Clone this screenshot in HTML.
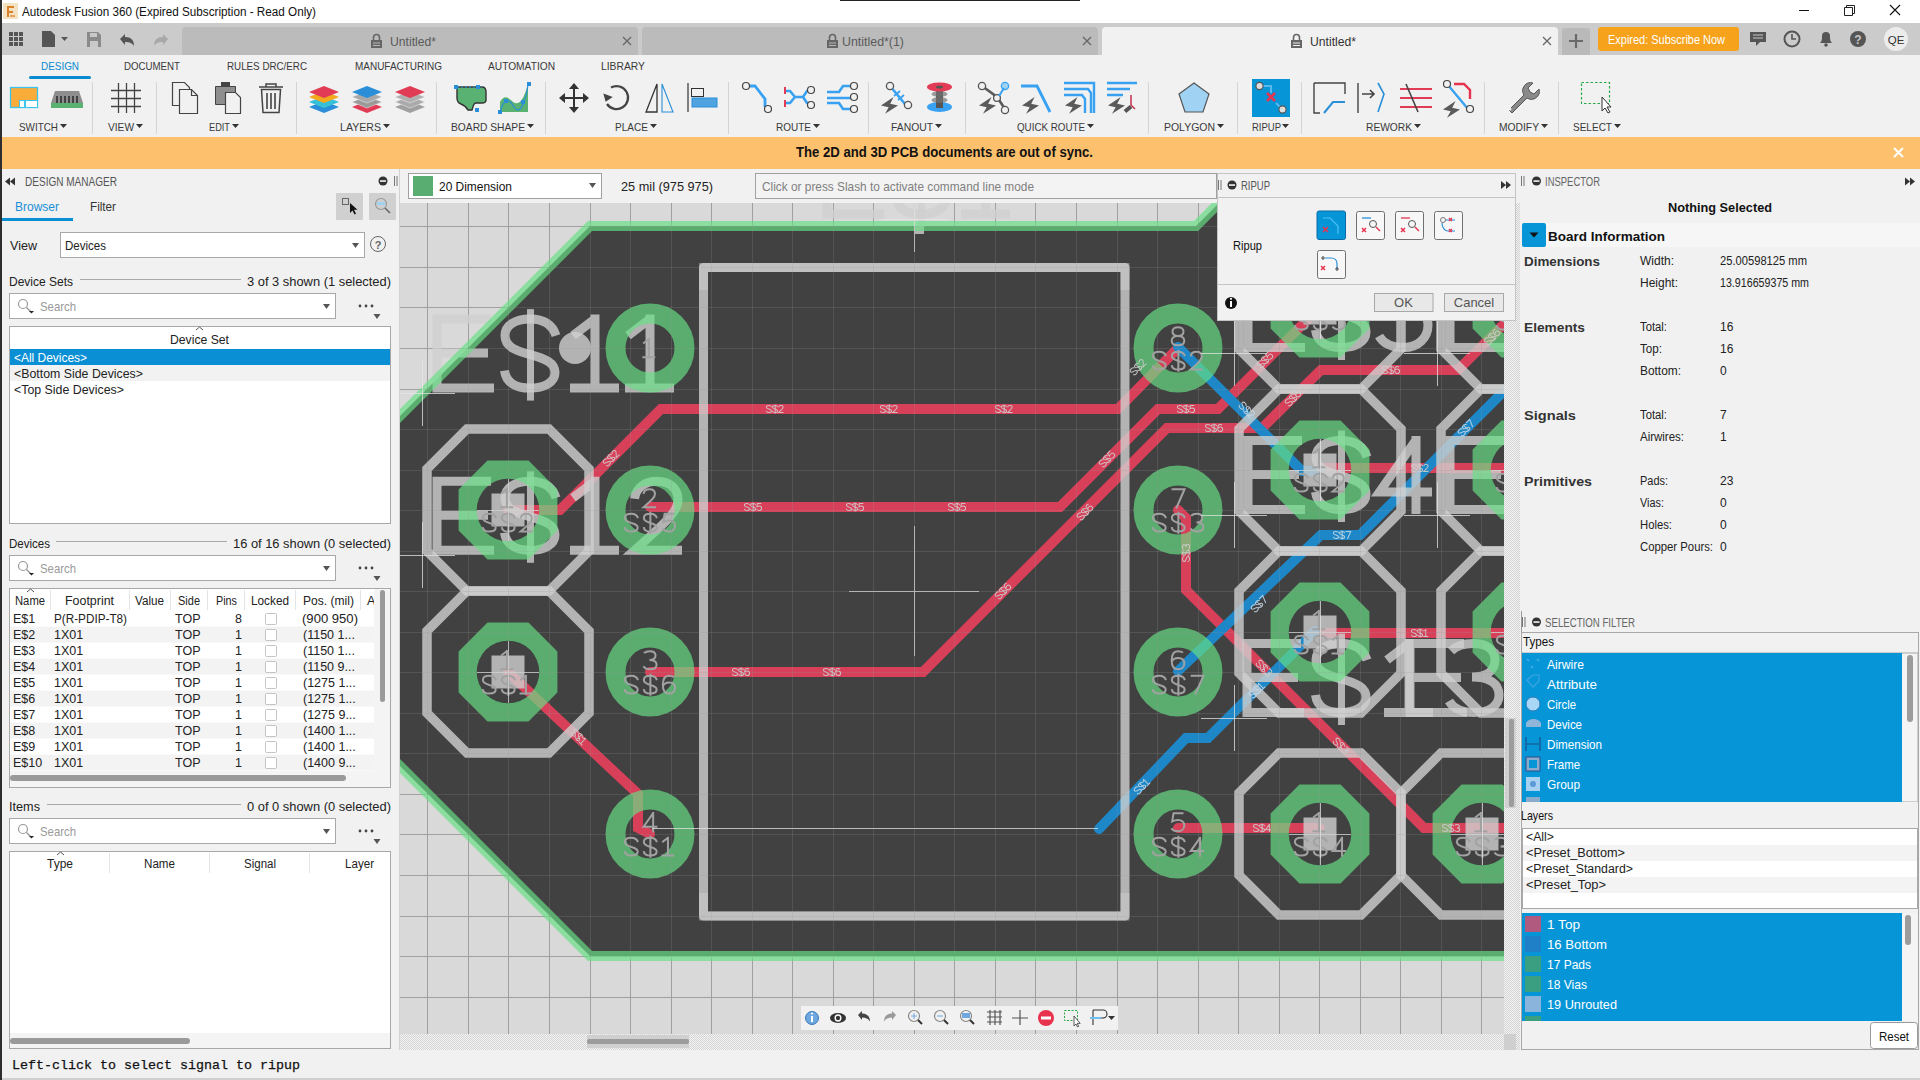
<!DOCTYPE html>
<html><head><meta charset="utf-8">
<style>
*{margin:0;padding:0;box-sizing:border-box}
html,body{width:1920px;height:1080px;overflow:hidden;background:#f1f1f1;font-family:"Liberation Sans",sans-serif;color:#222}
.a{position:absolute}
.t{position:absolute;white-space:nowrap;line-height:1}
svg{position:absolute;overflow:visible}
.lbl{position:absolute;font-size:11.5px;color:#3a3a3a;white-space:nowrap;line-height:1;top:121px}
.sep{position:absolute;top:82px;width:1px;height:52px;background:#d6d6d6}
.tri{display:inline-block;width:0;height:0;border-left:3.5px solid transparent;border-right:3.5px solid transparent;border-top:4px solid #333;margin-left:3px;vertical-align:2px}
</style></head><body>
<!-- left window border -->
<div class="a" style="left:0;top:0;width:2px;height:1080px;background:#2e2e2e;z-index:50"></div>

<!-- TITLE BAR -->
<div class="a" style="left:0;top:0;width:1920px;height:23px;background:#fff"></div>
<div class="a" style="left:840px;top:0;width:240px;height:1px;background:#222"></div>
<svg style="left:3px;top:3px" width="15" height="16"><rect x="0" y="0" width="15" height="16" fill="#f3e3c3"/><path d="M4 3h7v2H6v3h4v2H6v4H4z" fill="#d9822b"/><path d="M7 12h5v2H7z" fill="#e9a15a"/></svg>
<svg style="left:0;top:0" width="400" height="23"><text x="22" y="16" font-family="Liberation Sans" font-size="12.5" fill="#111" textLength="294" lengthAdjust="spacingAndGlyphs">Autodesk Fusion 360 (Expired Subscription - Read Only)</text></svg>
<svg style="left:1797px;top:4px" width="110" height="14">
 <path d="M2 6.5h10" stroke="#111" stroke-width="1"/>
 <path d="M47.5 3.5h8v8h-8z M49.5 3.5v-2h8v8h-2" fill="none" stroke="#222" stroke-width="1"/>
 <path d="M93 1l10 10M103 1l-10 10" stroke="#111" stroke-width="1.1"/>
</svg>

<!-- TAB BAR -->
<div class="a" style="left:0;top:23px;width:1920px;height:32px;background:#cbcbcb"></div>
<svg style="left:8px;top:31px" width="170" height="18">
 <g fill="#555"><rect x="1" y="1" width="4" height="4"/><rect x="6" y="1" width="4" height="4"/><rect x="11" y="1" width="4" height="4"/><rect x="1" y="6" width="4" height="4"/><rect x="6" y="6" width="4" height="4"/><rect x="11" y="6" width="4" height="4"/><rect x="1" y="11" width="4" height="4"/><rect x="6" y="11" width="4" height="4"/><rect x="11" y="11" width="4" height="4"/></g>
 <path d="M34 0h9l4 4v12h-13z" fill="#555"/><path d="M53 6h7l-3.5 4z" fill="#555"/>
 <path d="M79 1h11l3 3v12h-14z" fill="#8a8a8a"/><rect x="82" y="2" width="7" height="4" fill="#c8c8c8"/><rect x="82" y="10" width="8" height="6" fill="#c8c8c8"/>
 <path d="M112 8l5-5v3c6 0 9 3 9 9c-2-3-4-4-9-4v3z" fill="#555"/>
 <path d="M160 8l-5-5v3c-6 0-9 3-9 9c2-3 4-4 9-4v3z" fill="#a8a8a8"/>
</svg>
<div class="a" style="left:182px;top:27px;width:456px;height:28px;background:#bbbbbb;border-radius:4px 4px 0 0"></div>
<div class="a" style="left:642px;top:27px;width:456px;height:28px;background:#bbbbbb;border-radius:4px 4px 0 0"></div>
<div class="a" style="left:1102px;top:27px;width:456px;height:28px;background:#f1f1f1;border-radius:4px 4px 0 0"></div>
<svg style="left:370px;top:33px" width="13" height="16"><path d="M3.5 7V4.5a3 3 0 0 1 6 0V7" fill="none" stroke="#666" stroke-width="1.6"/><rect x="1" y="7" width="11" height="8" fill="#666"/><path d="M3 10h7M3 12.5h7" stroke="#b9b9b9" stroke-width="1"/></svg>
<svg style="left:0;top:23px" width="1920" height="32" viewBox="0 23 1920 32"><g font-family="Liberation Sans" font-size="13.5"><text x="390" y="46" fill="#5a5a5a" textLength="46" lengthAdjust="spacingAndGlyphs">Untitled*</text><text x="842" y="46" fill="#5a5a5a" textLength="62" lengthAdjust="spacingAndGlyphs">Untitled*(1)</text><text x="1310" y="46" fill="#333" textLength="46" lengthAdjust="spacingAndGlyphs">Untitled*</text></g></svg>
<svg style="left:622px;top:36px" width="10" height="10"><path d="M1 1l8 8M9 1l-8 8" stroke="#666" stroke-width="1.3"/></svg>
<svg style="left:826px;top:33px" width="13" height="16"><path d="M3.5 7V4.5a3 3 0 0 1 6 0V7" fill="none" stroke="#666" stroke-width="1.6"/><rect x="1" y="7" width="11" height="8" fill="#666"/><path d="M3 10h7M3 12.5h7" stroke="#b9b9b9" stroke-width="1"/></svg>

<svg style="left:1082px;top:36px" width="10" height="10"><path d="M1 1l8 8M9 1l-8 8" stroke="#666" stroke-width="1.3"/></svg>
<svg style="left:1290px;top:33px" width="13" height="16"><path d="M3.5 7V4.5a3 3 0 0 1 6 0V7" fill="none" stroke="#666" stroke-width="1.6"/><rect x="1" y="7" width="11" height="8" fill="#666"/><path d="M3 10h7M3 12.5h7" stroke="#f1f1f1" stroke-width="1"/></svg>

<svg style="left:1542px;top:36px" width="10" height="10"><path d="M1 1l8 8M9 1l-8 8" stroke="#666" stroke-width="1.3"/></svg>
<div class="a" style="left:1562px;top:28px;width:28px;height:27px;background:#b9b9b9;border-radius:3px 3px 0 0"></div>
<svg style="left:1569px;top:34px" width="14" height="14"><path d="M7 0v14M0 7h14" stroke="#6a6a6a" stroke-width="2.2"/></svg>
<div class="a" style="left:1598px;top:27px;width:141px;height:24px;background:#f7a21b;border-radius:3px"></div><svg style="left:0;top:23px" width="1920" height="32" viewBox="0 23 1920 32"><text x="1608" y="43.5" font-family="Liberation Sans" fill="#fff" font-size="13" textLength="117" lengthAdjust="spacingAndGlyphs">Expired: Subscribe Now</text></svg>

<svg style="left:1749px;top:30px" width="170" height="22">
 <path d="M1 2h16v10h-6l-4 4v-4H1z" fill="#555"/><path d="M4 5h10M4 8h10" stroke="#c8c8c8" stroke-width="1"/>
 <circle cx="43" cy="9" r="7.5" fill="none" stroke="#555" stroke-width="2"/><path d="M43 4v5h4" stroke="#555" stroke-width="1.6" fill="none"/>
 <path d="M71 13c2-2 2-4 2-7a4 4 0 0 1 8 0c0 3 0 5 2 7z" fill="#555"/><circle cx="77" cy="15" r="1.8" fill="#555"/>
 <circle cx="109" cy="9" r="8" fill="#555"/><text x="109" y="13.5" font-size="12" font-weight="bold" fill="#c8c8c8" text-anchor="middle" font-family="Liberation Sans">?</text>
 <circle cx="147" cy="9" r="12" fill="#ececec"/><text x="147" y="13.5" font-size="11.5" fill="#333" text-anchor="middle" font-family="Liberation Sans">QE</text>
</svg>

<!-- RIBBON -->
<div class="a" style="left:0;top:55px;width:1920px;height:82px;background:#f1f1f1"></div>
<svg style="left:0;top:55px" width="700" height="25" viewBox="0 55 700 25"><g font-family="Liberation Sans" font-size="11.5" fill="#3a3a3a"><text x="41" y="70" fill="#0a8bd0" textLength="38" lengthAdjust="spacingAndGlyphs">DESIGN</text><text x="124" y="70" textLength="56" lengthAdjust="spacingAndGlyphs">DOCUMENT</text><text x="227" y="70" textLength="80" lengthAdjust="spacingAndGlyphs">RULES DRC/ERC</text><text x="355" y="70" textLength="87" lengthAdjust="spacingAndGlyphs">MANUFACTURING</text><text x="488" y="70" textLength="67" lengthAdjust="spacingAndGlyphs">AUTOMATION</text><text x="601" y="70" textLength="44" lengthAdjust="spacingAndGlyphs">LIBRARY</text></g></svg>
<div class="a" style="left:29px;top:76px;width:62px;height:3px;background:#0a8bd0;border-radius:2px"></div>





<svg style="left:0;top:0" width="1920" height="140" viewBox="0 0 1920 140">
<g font-family="Liberation Sans" font-size="11.5" fill="#3a3a3a">
 <text x="19" y="131" textLength="39" lengthAdjust="spacingAndGlyphs">SWITCH</text>
 <text x="108" y="131" textLength="26" lengthAdjust="spacingAndGlyphs">VIEW</text>
 <text x="209" y="131" textLength="21" lengthAdjust="spacingAndGlyphs">EDIT</text>
 <text x="340" y="131" textLength="41" lengthAdjust="spacingAndGlyphs">LAYERS</text>
 <text x="451" y="131" textLength="74" lengthAdjust="spacingAndGlyphs">BOARD SHAPE</text>
 <text x="615" y="131" textLength="33" lengthAdjust="spacingAndGlyphs">PLACE</text>
 <text x="776" y="131" textLength="35" lengthAdjust="spacingAndGlyphs">ROUTE</text>
 <text x="891" y="131" textLength="42" lengthAdjust="spacingAndGlyphs">FANOUT</text>
 <text x="1017" y="131" textLength="68" lengthAdjust="spacingAndGlyphs">QUICK ROUTE</text>
 <text x="1164" y="131" textLength="51" lengthAdjust="spacingAndGlyphs">POLYGON</text>
 <text x="1252" y="131" textLength="29" lengthAdjust="spacingAndGlyphs">RIPUP</text>
 <text x="1366" y="131" textLength="46" lengthAdjust="spacingAndGlyphs">REWORK</text>
 <text x="1499" y="131" textLength="40" lengthAdjust="spacingAndGlyphs">MODIFY</text>
 <text x="1573" y="131" textLength="39" lengthAdjust="spacingAndGlyphs">SELECT</text>
</g>
<g fill="#333">
 <path d="M60 124h7l-3.5 4z"/><path d="M136 124h7l-3.5 4z"/><path d="M232 124h7l-3.5 4z"/><path d="M383 124h7l-3.5 4z"/>
 <path d="M527 124h7l-3.5 4z"/><path d="M650 124h7l-3.5 4z"/><path d="M813 124h7l-3.5 4z"/><path d="M935 124h7l-3.5 4z"/>
 <path d="M1087 124h7l-3.5 4z"/><path d="M1217 124h7l-3.5 4z"/><path d="M1282 124h7l-3.5 4z"/><path d="M1414 124h7l-3.5 4z"/>
 <path d="M1541 124h7l-3.5 4z"/><path d="M1614 124h7l-3.5 4z"/>
</g>
<g fill="#d4d4d4">
 <rect x="92" y="82" width="1" height="52"/><rect x="156" y="82" width="1" height="52"/><rect x="296" y="82" width="1" height="52"/>
 <rect x="436" y="82" width="1" height="52"/><rect x="545" y="82" width="1" height="52"/><rect x="728" y="82" width="1" height="52"/>
 <rect x="868" y="82" width="1" height="52"/><rect x="965" y="82" width="1" height="52"/><rect x="1148" y="82" width="1" height="52"/>
 <rect x="1237" y="82" width="1" height="52"/><rect x="1301" y="82" width="1" height="52"/><rect x="1484" y="82" width="1" height="52"/>
 <rect x="1558" y="82" width="1" height="52"/>
</g>
<!-- SWITCH board -->
<rect x="10.5" y="87.5" width="27" height="20" fill="#f9ac3a" stroke="#3cc4ee" stroke-width="1.3"/>
<rect x="19.5" y="100.5" width="5" height="7" fill="#fff" stroke="#3cc4ee" stroke-width="1"/><rect x="25.5" y="100.5" width="12" height="7" fill="#fff" stroke="#3cc4ee" stroke-width="1"/>
<!-- chip -->
<path d="M55 91h24l4 12h-32z" fill="#8e8e8e"/><rect x="51" y="103" width="32" height="5" fill="#5ab272"/>
<g stroke="#222" stroke-width="1.4"><path d="M57 96v7M61 96v7M65 96v7M69 96v7M73 96v7M77 96v7"/></g>
<!-- VIEW grid -->
<g stroke="#444" stroke-width="1.3"><path d="M118.5 83v30M126.5 83v30M134.5 83v30M111 90.5h30M111 98.5h30M111 106.5h30"/></g>
<!-- copy -->
<path d="M172.5 82.5h12l5 5v18h-17z" fill="#f1f1f1" stroke="#444" stroke-width="1.2"/>
<path d="M179.5 89.5h12l6 6v18h-18z" fill="#f1f1f1" stroke="#444" stroke-width="1.2"/><path d="M191.5 89.5v6h6" fill="none" stroke="#444" stroke-width="1.2"/>
<!-- paste -->
<path d="M215.5 86.5h20v18h-20z" fill="#8e8e8e" stroke="#444" stroke-width="1"/><rect x="221" y="82" width="9" height="5" fill="#444"/>
<path d="M225.5 92.5h10l5 5v16h-15z" fill="#f1f1f1" stroke="#444" stroke-width="1.2"/>
<!-- trash -->
<path d="M259 87h24M266 87v-3h10v3" fill="none" stroke="#444" stroke-width="1.5"/><path d="M261.5 89.5h19l-1.5 23h-16z" fill="#f1f1f1" stroke="#444" stroke-width="1.5"/>
<path d="M267 93v16M271 93v16M275 93v16" stroke="#444" stroke-width="1.6"/>
<!-- LAYERS -->
<g transform="translate(324,97)"><path d="M-15 10l15-6l15 6l-15 6z" fill="#2a8fd8"/><path d="M-15 5l15-6l15 6l-15 6z" fill="#37c0d8"/><path d="M-15 0l15-6l15 6l-15 6z" fill="#f4a81e"/><path d="M-15 -5l15-6l15 6l-15 6z" fill="#e23b55"/></g>
<g transform="translate(367,97)"><path d="M-15 10l15-6l15 6l-15 6z" fill="#e23b55"/><path d="M-15 5l15-6l15 6l-15 6z" fill="#9a9a9a" stroke="#f1f1f1" stroke-width=".5"/><path d="M-15 0l15-6l15 6l-15 6z" fill="#a8a8a8" stroke="#f1f1f1" stroke-width=".5"/><path d="M-15 -5l15-6l15 6l-15 6z" fill="#2a8fd8"/></g>
<g transform="translate(410,97)"><path d="M-15 10l15-6l15 6l-15 6z" fill="#a0a0a0"/><path d="M-15 5l15-6l15 6l-15 6z" fill="#aaa" stroke="#f1f1f1" stroke-width=".5"/><path d="M-15 0l15-6l15 6l-15 6z" fill="#b0b0b0" stroke="#f1f1f1" stroke-width=".5"/><path d="M-15 -5l15-6l15 6l-15 6z" fill="#e23b55"/></g>
<!-- BOARD SHAPE -->
<path d="M457 87h25c3 0 4 2 4 5v8c0 3-2 3-4 3h-6c-3 0-3 5-4 7h-4c-2-3-4-5-7-6c-3-1-4-3-4-6v-7c0-2 0-4 0-4z" fill="#5ab272" stroke="#333" stroke-width="1.4"/>
<path d="M457 87h25" stroke="#2a8fd8" stroke-dasharray="2 2" stroke-width="1.2"/>
<rect x="454" y="85" width="4" height="4" fill="#2a8fd8"/><rect x="476" y="85" width="4" height="4" fill="#2a8fd8"/><rect x="475" y="108" width="4" height="4" fill="#2a8fd8"/>
<path d="M500 112v-10c6-10 10-1 15 1c6 2 10-8 13-19v28z" fill="#5ab272"/>
<path d="M500 112c4-14 9-14 14-5c4 6 10 4 14-22" fill="none" stroke="#2a8fd8" stroke-width="1.2"/>
<rect x="498" y="110" width="4" height="4" fill="#2a8fd8"/><rect x="504" y="99" width="4" height="4" fill="#2a8fd8"/><rect x="521" y="100" width="4" height="4" fill="#2a8fd8"/><rect x="527" y="82" width="4" height="4" fill="#2a8fd8"/>
<!-- PLACE move -->
<g fill="#333"><path d="M574 83l-5 6h4v8h-8v-4l-6 5l6 5v-4h8v8h-4l5 6l5-6h-4v-8h8v4l6-5l-6-5v4h-8v-8h4z"/></g>
<path d="M611 87.5A11.5 11.5 0 1 1 607 104" fill="none" stroke="#444" stroke-width="2.3"/><path d="M602 95h10l-5 7z" fill="#444" transform="rotate(20 607 98)"/>
<path d="M657 112v-28l-11 28z" fill="none" stroke="#333" stroke-width="1.3"/><path d="M662 112v-28l11 28z" fill="none" stroke="#2a8fd8" stroke-width="1.1"/>
<path d="M688 83v29" stroke="#333" stroke-width="1.2"/><rect x="691.5" y="88.5" width="12" height="8" fill="none" stroke="#333" stroke-width="1"/><rect x="692" y="98" width="25" height="9" fill="#4fa3e0" stroke="#2a8fd8" stroke-width="1"/>
<!-- ROUTE -->
<path d="M749 86h6l10 13v8" fill="none" stroke="#38a1f2" stroke-width="2.8"/><circle cx="746" cy="86" r="3.5" fill="#f1f1f1" stroke="#444" stroke-width="1.2"/><circle cx="768" cy="109" r="3.5" fill="#f1f1f1" stroke="#444" stroke-width="1.2"/>
<path d="M786 91h4l5 6h8l4-6h3M786 103h4l5-6M803 97l4 6h3" fill="none" stroke="#38a1f2" stroke-width="2.6"/><rect x="784" y="87" width="2" height="7" fill="#e23b55"/><rect x="784" y="100" width="2" height="7" fill="#e23b55"/>
<circle cx="811" cy="90" r="3.5" fill="#f1f1f1" stroke="#444" stroke-width="1.2"/><circle cx="811" cy="105" r="3.5" fill="#f1f1f1" stroke="#444" stroke-width="1.2"/>
<path d="M827 92h12l4-6h8M827 98h24M827 103h12l4 6h8" fill="none" stroke="#38a1f2" stroke-width="2.6"/>
<circle cx="854" cy="86" r="3.5" fill="#f1f1f1" stroke="#444" stroke-width="1.2"/><circle cx="854" cy="97" r="3.5" fill="#f1f1f1" stroke="#444" stroke-width="1.2"/><circle cx="854" cy="109" r="3.5" fill="#f1f1f1" stroke="#444" stroke-width="1.2"/>
<!-- FANOUT -->
<path d="M893.6 97.0 L881.0 105.6 L888.7 107.2 L885.0 113.7 L898.0 105.4 L890.2 103.7z" fill="#5a5a5a"/><path d="M890 86l15 18" stroke="#38a1f2" stroke-width="2.6"/><path d="M894 96l6-5M898 100l6-5" stroke="#38a1f2" stroke-width="1.8"/>
<circle cx="890" cy="86" r="3.6" fill="#f1f1f1" stroke="#555" stroke-width="1.3"/><circle cx="908" cy="105" r="3.6" fill="#f1f1f1" stroke="#555" stroke-width="1.3"/>
<ellipse cx="939.5" cy="107" rx="12.5" ry="5" fill="#38a1f2"/><rect x="936" y="88" width="7" height="20" fill="#555"/><ellipse cx="939.5" cy="94" rx="8" ry="3" fill="#999"/><ellipse cx="939.5" cy="100" rx="8" ry="3" fill="#999"/><rect x="936" y="90" width="7" height="17" fill="#555" opacity=".7"/><ellipse cx="939.5" cy="87" rx="12.5" ry="4.5" fill="#e23b55"/><ellipse cx="939.5" cy="87" rx="3.5" ry="1.6" fill="#555"/>
<!-- QUICK ROUTE -->
<path d="M982 86l15 11l8 12" fill="none" stroke="#5a5a5a" stroke-width="2.6"/><circle cx="982" cy="86" r="3.6" fill="#f1f1f1" stroke="#555" stroke-width="1.3"/><circle cx="997" cy="98" r="3.4" fill="#f1f1f1" stroke="#555" stroke-width="1.3"/><circle cx="1005" cy="110" r="3.6" fill="#f1f1f1" stroke="#555" stroke-width="1.3"/><circle cx="1005" cy="86" r="3.6" fill="#9fd2f3" stroke="#38a1f2" stroke-width="1.3"/><path d="M999 96l5-8" stroke="#38a1f2" stroke-width="2"/>
<path d="M991.6 97.0 L979.0 105.6 L986.7 107.2 L983.0 113.7 L996.0 105.4 L988.2 103.7z" fill="#5a5a5a"/>
<path d="M1021 86h16l13 26" fill="none" stroke="#38a1f2" stroke-width="2.8"/><path d="M1034.6 97.0 L1022.0 105.6 L1029.7 107.2 L1026.0 113.7 L1039.0 105.4 L1031.2 103.7z" fill="#5a5a5a"/>
<path d="M1064 83h30v30M1064 89h24l3 4v20M1064 95h18l3 4v14" fill="none" stroke="#38a1f2" stroke-width="2.4"/><path d="M1077.6 97.0 L1065.0 105.6 L1072.7 107.2 L1069.0 113.7 L1082.0 105.4 L1074.2 103.7z" fill="#5a5a5a"/>
<path d="M1107 83h30M1107 89h23M1107 95h16" fill="none" stroke="#38a1f2" stroke-width="2.4"/><path d="M1131 95v10l4 4" fill="none" stroke="#c83a55" stroke-width="1.6"/><rect x="1124" y="107" width="8" height="4" fill="#555" transform="rotate(-40 1128 109)"/>
<path d="M1120.6 97.0 L1108.0 105.6 L1115.7 107.2 L1112.0 113.7 L1125.0 105.4 L1117.2 103.7z" fill="#5a5a5a"/>
<!-- POLYGON -->
<path d="M1194 83l15 11l-6 18h-18l-6-18z" fill="#9fd2f3" stroke="#555" stroke-width="1.2"/>
<!-- RIPUP -->
<rect x="1252" y="79" width="38" height="38" fill="#0696d7"/>
<path d="M1263 86h8v7M1276 103l4 4" fill="none" stroke="#5ab8f0" stroke-width="2"/>
<path d="M1267 93l8 8M1275 93l-8 8" stroke="#e8334f" stroke-width="2.6"/>
<circle cx="1259.5" cy="86" r="3.6" fill="#ddd" stroke="#555" stroke-width="1.2"/><circle cx="1282.5" cy="109.5" r="3.6" fill="#ddd" stroke="#555" stroke-width="1.2"/>
<!-- REWORK -->
<path d="M1314 83h31v11M1314 83v30h6" fill="none" stroke="#444" stroke-width="1.4"/><path d="M1324 113l9-11h12" fill="none" stroke="#2a8fd8" stroke-width="2"/>
<path d="M1358 83v30" stroke="#444" stroke-width="1.4"/><path d="M1362 94h12M1370 90l4 4l-4 4" fill="none" stroke="#444" stroke-width="1.6"/><path d="M1378 83l6 11l-6 18" fill="none" stroke="#2a8fd8" stroke-width="1.6"/>
<path d="M1400 89h32M1400 98h32M1400 107h32" stroke="#e23b55" stroke-width="1.8"/><path d="M1406 84l12 28" stroke="#444" stroke-width="1.6"/><path d="M1400 89h8M1400 98h10M1400 107h12" stroke="#f1f1f1" stroke-width="0"/>
<path d="M1448 85l20 24" stroke="#38a1f2" stroke-width="2.4"/><path d="M1454 84h10l6 6v9" fill="none" stroke="#e8334f" stroke-width="2.4"/><circle cx="1447" cy="84" r="3.5" fill="#f1f1f1" stroke="#444" stroke-width="1.2"/><circle cx="1470" cy="109" r="3.5" fill="#f1f1f1" stroke="#444" stroke-width="1.2"/>
<path d="M1455.6 101.0 L1443.0 109.6 L1450.7 111.2 L1447.0 117.7 L1460.0 109.4 L1452.2 107.7z" fill="#5a5a5a"/>
<!-- MODIFY wrench -->
<path d="M1509 110l15-15a8 8 0 0 1 9-12l-5 5l2 4l4 2l5-5a8 8 0 0 1-12 9l-15 15z" fill="#8a8a8a" stroke="#555" stroke-width="1"/><circle cx="1510" cy="109" r="1.5" fill="#f1f1f1"/>
<!-- SELECT -->
<rect x="1581.5" y="82.5" width="28" height="21" fill="none" stroke="#26a844" stroke-width="1.2" stroke-dasharray="2.5 2"/>
<path d="M1602 97v14l3-3l3 5l2-1l-3-5h4z" fill="#fff" stroke="#333" stroke-width="1"/>
</svg>


<!-- BANNER -->
<div class="a" style="left:0;top:137px;width:1920px;height:32px;background:#fdc06d"></div>
<svg style="left:0;top:137px" width="1920" height="32" viewBox="0 137 1920 32"><text x="796" y="157" font-family="Liberation Sans" font-size="14.5" font-weight="bold" fill="#111" textLength="297" lengthAdjust="spacingAndGlyphs">The 2D and 3D PCB documents are out of sync.</text></svg>
<svg style="left:1893px;top:147px" width="11" height="11"><path d="M1 1l9 9M10 1l-9 9" stroke="#fff" stroke-width="2"/></svg>

<!-- LEFT PANEL -->
<div class="a" style="left:2px;top:169px;width:397px;height:881px;background:#f1f1f1"></div>
<div class="a" style="left:399px;top:169px;width:1px;height:881px;background:#d2d2d2"></div>
<svg style="left:0;top:165px" width="400" height="890" viewBox="0 165 400 890">
 <g font-family="Liberation Sans">
 <path d="M5 181.5l5-4v8z M10 181.5l5-4v8z" fill="#333"/>
 <text x="25" y="186" font-size="12" fill="#555" textLength="92" lengthAdjust="spacingAndGlyphs">DESIGN MANAGER</text>
 <circle cx="383" cy="181" r="4.5" fill="#333"/><rect x="380" y="180.3" width="6" height="1.5" fill="#fff"/>
 <rect x="394" y="176" width="1" height="10" fill="#777"/><rect x="396.5" y="176" width="1" height="10" fill="#777"/>
 <text x="15" y="211" font-size="13.5" fill="#1a8fd5" textLength="44" lengthAdjust="spacingAndGlyphs">Browser</text>
 <text x="90" y="211" font-size="13.5" fill="#333" textLength="26" lengthAdjust="spacingAndGlyphs">Filter</text>
 <rect x="2" y="218" width="71" height="3" fill="#0a8fd5"/>
 <rect x="336" y="193" width="27" height="27" rx="1" fill="#d0d0d0"/><rect x="369" y="193" width="27" height="27" rx="1" fill="#d0d0d0"/>
 <rect x="342.5" y="198.5" width="6" height="6" fill="none" stroke="#666" stroke-width="1"/><path d="M350 203v10l2.5-2.5l2 4l1.5-.8l-2-4h3.5z" fill="#111"/>
 <circle cx="381" cy="204" r="5.5" fill="none" stroke="#999" stroke-width="1.2"/><rect x="377" y="202" width="8" height="3" fill="#9fd2f3"/><path d="M385 208l5 5" stroke="#666" stroke-width="1.6"/>
 <text x="10" y="250" font-size="13" fill="#222" textLength="27" lengthAdjust="spacingAndGlyphs">View</text>
 <rect x="60.5" y="232.5" width="304" height="25" fill="#fff" stroke="#a8a8a8"/>
 <text x="65" y="250" font-size="13" fill="#222" textLength="41" lengthAdjust="spacingAndGlyphs">Devices</text>
 <path d="M352 243h7l-3.5 5z" fill="#555"/>
 <circle cx="378" cy="244" r="7.5" fill="none" stroke="#666" stroke-width="1"/><text x="378" y="248.5" font-size="11" font-weight="bold" fill="#666" text-anchor="middle">?</text>

 <text x="9" y="286" font-size="13" fill="#222" textLength="64" lengthAdjust="spacingAndGlyphs">Device Sets</text>
 <rect x="80" y="279" width="161" height="1" fill="#a8a8a8"/>
 <text x="247" y="286" font-size="13" fill="#222" textLength="144" lengthAdjust="spacingAndGlyphs">3 of 3 shown (1 selected)</text>
 <rect x="9.5" y="293.5" width="326" height="25" fill="#fff" stroke="#a8a8a8"/>
 <circle cx="23" cy="304" r="4.5" fill="none" stroke="#999" stroke-width="1.2"/><path d="M26.5 307.5l4 4" stroke="#999" stroke-width="1.4"/><path d="M29 311h5l-2.5 2.5z" fill="#222"/>
 <text x="40" y="311" font-size="13" fill="#9a9a9a" textLength="36" lengthAdjust="spacingAndGlyphs">Search</text>
 <path d="M323 304h7l-3.5 5z" fill="#555"/>
 <circle cx="360" cy="306" r="1.4" fill="#444"/><circle cx="366" cy="306" r="1.4" fill="#444"/><circle cx="372" cy="306" r="1.4" fill="#444"/><path d="M373.5 314h7l-3.5 5z" fill="#555"/>
 <rect x="9.5" y="326.5" width="381" height="197" fill="#fff" stroke="#a8a8a8"/>
 <path d="M196 330l3.5-3l3.5 3" fill="none" stroke="#555" stroke-width="1"/>
 <text x="170" y="344" font-size="13" fill="#222" textLength="59" lengthAdjust="spacingAndGlyphs">Device Set</text>
 <rect x="10" y="349" width="380" height="16" fill="#0a8fd5"/>
 <rect x="10" y="365" width="380" height="16" fill="#f2f2f2"/>
 <text x="14" y="362" font-size="12.5" fill="#fff" textLength="73" lengthAdjust="spacingAndGlyphs">&lt;All Devices&gt;</text>
 <text x="14" y="378" font-size="12.5" fill="#222" textLength="129" lengthAdjust="spacingAndGlyphs">&lt;Bottom Side Devices&gt;</text>
 <text x="14" y="394" font-size="12.5" fill="#222" textLength="110" lengthAdjust="spacingAndGlyphs">&lt;Top Side Devices&gt;</text>

 <text x="9" y="548" font-size="13" fill="#222" textLength="41" lengthAdjust="spacingAndGlyphs">Devices</text>
 <rect x="56" y="541" width="171" height="1" fill="#a8a8a8"/>
 <text x="233" y="548" font-size="13" fill="#222" textLength="158" lengthAdjust="spacingAndGlyphs">16 of 16 shown (0 selected)</text>
 <rect x="9.5" y="555.5" width="326" height="25" fill="#fff" stroke="#a8a8a8"/>
 <circle cx="23" cy="566" r="4.5" fill="none" stroke="#999" stroke-width="1.2"/><path d="M26.5 569.5l4 4" stroke="#999" stroke-width="1.4"/><path d="M29 573h5l-2.5 2.5z" fill="#222"/>
 <text x="40" y="573" font-size="13" fill="#9a9a9a" textLength="36" lengthAdjust="spacingAndGlyphs">Search</text>
 <path d="M323 566h7l-3.5 5z" fill="#555"/>
 <circle cx="360" cy="568" r="1.4" fill="#444"/><circle cx="366" cy="568" r="1.4" fill="#444"/><circle cx="372" cy="568" r="1.4" fill="#444"/><path d="M373.5 576h7l-3.5 5z" fill="#555"/>
 <rect x="9.5" y="588.5" width="381" height="199" fill="#fff" stroke="#a8a8a8"/>
 <g fill="#f3f3f3"><rect x="10" y="626.5" width="364" height="16"/><rect x="10" y="658.5" width="364" height="16"/><rect x="10" y="690.5" width="364" height="16"/><rect x="10" y="722.5" width="364" height="16"/><rect x="10" y="754.5" width="364" height="16"/></g>
 <g fill="#e4e4e4"><rect x="50" y="590" width="1" height="20"/><rect x="129" y="590" width="1" height="20"/><rect x="170" y="590" width="1" height="20"/><rect x="207" y="590" width="1" height="20"/><rect x="244" y="590" width="1" height="20"/><rect x="295" y="590" width="1" height="20"/><rect x="360" y="590" width="1" height="20"/></g>
 <path d="M27 592l3.5-3l3.5 3" fill="none" stroke="#555" stroke-width="1"/>
 <g font-size="12.5" fill="#222">
 <text x="15" y="605" textLength="30" lengthAdjust="spacingAndGlyphs">Name</text>
 <text x="65" y="605" textLength="49" lengthAdjust="spacingAndGlyphs">Footprint</text>
 <text x="135" y="605" textLength="29" lengthAdjust="spacingAndGlyphs">Value</text>
 <text x="178" y="605" textLength="22" lengthAdjust="spacingAndGlyphs">Side</text>
 <text x="216" y="605" textLength="21" lengthAdjust="spacingAndGlyphs">Pins</text>
 <text x="251" y="605" textLength="38" lengthAdjust="spacingAndGlyphs">Locked</text>
 <text x="303" y="605" textLength="51" lengthAdjust="spacingAndGlyphs">Pos. (mil)</text>
 <text x="367" y="605">A</text>
 </g>
 <g font-size="12.5" fill="#222" id="devrows">
 <text x="13" y="623">E$1</text><text x="54" y="623" textLength="73" lengthAdjust="spacingAndGlyphs">P(R-PDIP-T8)</text><text x="175" y="623">TOP</text><text x="242" y="623" text-anchor="end">8</text><text x="302" y="623" textLength="56" lengthAdjust="spacingAndGlyphs">(900 950)</text>
 <text x="13" y="639">E$2</text><text x="54" y="639">1X01</text><text x="175" y="639">TOP</text><text x="242" y="639" text-anchor="end">1</text><text x="303" y="639">(1150 1...</text>
 <text x="13" y="655">E$3</text><text x="54" y="655">1X01</text><text x="175" y="655">TOP</text><text x="242" y="655" text-anchor="end">1</text><text x="303" y="655">(1150 1...</text>
 <text x="13" y="671">E$4</text><text x="54" y="671">1X01</text><text x="175" y="671">TOP</text><text x="242" y="671" text-anchor="end">1</text><text x="303" y="671">(1150 9...</text>
 <text x="13" y="687">E$5</text><text x="54" y="687">1X01</text><text x="175" y="687">TOP</text><text x="242" y="687" text-anchor="end">1</text><text x="303" y="687">(1275 1...</text>
 <text x="13" y="703">E$6</text><text x="54" y="703">1X01</text><text x="175" y="703">TOP</text><text x="242" y="703" text-anchor="end">1</text><text x="303" y="703">(1275 1...</text>
 <text x="13" y="719">E$7</text><text x="54" y="719">1X01</text><text x="175" y="719">TOP</text><text x="242" y="719" text-anchor="end">1</text><text x="303" y="719">(1275 9...</text>
 <text x="13" y="735">E$8</text><text x="54" y="735">1X01</text><text x="175" y="735">TOP</text><text x="242" y="735" text-anchor="end">1</text><text x="303" y="735">(1400 1...</text>
 <text x="13" y="751">E$9</text><text x="54" y="751">1X01</text><text x="175" y="751">TOP</text><text x="242" y="751" text-anchor="end">1</text><text x="303" y="751">(1400 1...</text>
 <text x="13" y="767">E$10</text><text x="54" y="767">1X01</text><text x="175" y="767">TOP</text><text x="242" y="767" text-anchor="end">1</text><text x="303" y="767">(1400 9...</text>
 </g>
 <g fill="#fff" stroke="#c4c4c4"><rect x="265.5" y="613.5" width="11" height="11" rx="1"/><rect x="265.5" y="629.5" width="11" height="11" rx="1"/><rect x="265.5" y="645.5" width="11" height="11" rx="1"/><rect x="265.5" y="661.5" width="11" height="11" rx="1"/><rect x="265.5" y="677.5" width="11" height="11" rx="1"/><rect x="265.5" y="693.5" width="11" height="11" rx="1"/><rect x="265.5" y="709.5" width="11" height="11" rx="1"/><rect x="265.5" y="725.5" width="11" height="11" rx="1"/><rect x="265.5" y="741.5" width="11" height="11" rx="1"/><rect x="265.5" y="757.5" width="11" height="11" rx="1"/></g>
 <rect x="374" y="589" width="16" height="198" fill="#f4f4f4"/><rect x="380" y="590" width="5" height="112" rx="2.5" fill="#9a9a9a"/>
 <rect x="10" y="771" width="364" height="16" fill="#f4f4f4"/><rect x="10" y="775" width="336" height="6" rx="3" fill="#9a9a9a"/>

 <text x="9" y="811" font-size="13" fill="#222" textLength="31" lengthAdjust="spacingAndGlyphs">Items</text>
 <rect x="47" y="804" width="194" height="1" fill="#a8a8a8"/>
 <text x="247" y="811" font-size="13" fill="#222" textLength="144" lengthAdjust="spacingAndGlyphs">0 of 0 shown (0 selected)</text>
 <rect x="9.5" y="818.5" width="326" height="25" fill="#fff" stroke="#a8a8a8"/>
 <circle cx="23" cy="829" r="4.5" fill="none" stroke="#999" stroke-width="1.2"/><path d="M26.5 832.5l4 4" stroke="#999" stroke-width="1.4"/><path d="M29 836h5l-2.5 2.5z" fill="#222"/>
 <text x="40" y="836" font-size="13" fill="#9a9a9a" textLength="36" lengthAdjust="spacingAndGlyphs">Search</text>
 <path d="M323 829h7l-3.5 5z" fill="#555"/>
 <circle cx="360" cy="831" r="1.4" fill="#444"/><circle cx="366" cy="831" r="1.4" fill="#444"/><circle cx="372" cy="831" r="1.4" fill="#444"/><path d="M373.5 839h7l-3.5 5z" fill="#555"/>
 <rect x="9.5" y="851.5" width="381" height="197" fill="#fff" stroke="#a8a8a8"/>
 <g fill="#e4e4e4"><rect x="109" y="853" width="1" height="20"/><rect x="209" y="853" width="1" height="20"/><rect x="309" y="853" width="1" height="20"/></g>
 <path d="M57 855l3.5-3l3.5 3" fill="none" stroke="#555" stroke-width="1"/>
 <g font-size="12.5" fill="#222">
 <text x="47" y="868" textLength="26" lengthAdjust="spacingAndGlyphs">Type</text>
 <text x="144" y="868" textLength="31" lengthAdjust="spacingAndGlyphs">Name</text>
 <text x="244" y="868" textLength="32" lengthAdjust="spacingAndGlyphs">Signal</text>
 <text x="345" y="868" textLength="29" lengthAdjust="spacingAndGlyphs">Layer</text>
 </g>
 <rect x="10" y="1033" width="380" height="15" fill="#f4f4f4"/><rect x="10" y="1038" width="180" height="6" rx="3" fill="#9a9a9a"/>
 </g>
</svg>
<!-- STATUS BAR -->
<div class="a" style="left:2px;top:1050px;width:1918px;height:30px;background:#f1f1f1"></div>
<div class="a" style="left:0;top:1078px;width:1920px;height:2px;background:#cfcfcf"></div>
<svg style="left:0;top:1050px" width="400" height="30" viewBox="0 1050 400 30"><text x="12" y="1069" font-family="Liberation Mono" font-size="13.3" fill="#111" stroke="#111" stroke-width="0.25" textLength="288" lengthAdjust="spacingAndGlyphs">Left-click to select signal to ripup</text></svg>

<!--CANVAS_START--><svg style="left:0;top:0" width="1920" height="1080" viewBox="0 0 1920 1080">
<defs>
<clipPath id="cv"><rect x="400" y="203" width="1104" height="831"/></clipPath>
<clipPath id="bd"><polygon points="380,436 590,226 1196,226 1229,193 1600,193 1600,956 590,956 380,746"/></clipPath>
</defs>
<rect x="400" y="169" width="1104" height="34" fill="#f1f1f1"/>
<g clip-path="url(#cv)">
<rect x="400" y="203" width="1104" height="831" fill="#d9d9d9"/>
<path d="M387.5 203V1034M427.5 203V1034M468.5 203V1034M508.5 203V1034M549.5 203V1034M590.5 203V1034M630.5 203V1034M671.5 203V1034M711.5 203V1034M752.5 203V1034M792.5 203V1034M833.5 203V1034M873.5 203V1034M914.5 203V1034M954.5 203V1034M995.5 203V1034M1035.5 203V1034M1076.5 203V1034M1117.5 203V1034M1157.5 203V1034M1198.5 203V1034M1238.5 203V1034M1279.5 203V1034M1319.5 203V1034M1360.5 203V1034M1400.5 203V1034M1441.5 203V1034M1481.5 203V1034M1522.5 203V1034M1562.5 203V1034M1603.5 203V1034M400 186.5H1504M400 226.5H1504M400 267.5H1504M400 307.5H1504M400 348.5H1504M400 389.5H1504M400 429.5H1504M400 470.5H1504M400 510.5H1504M400 551.5H1504M400 591.5H1504M400 632.5H1504M400 672.5H1504M400 713.5H1504M400 753.5H1504M400 794.5H1504M400 834.5H1504M400 875.5H1504M400 916.5H1504M400 956.5H1504M400 997.5H1504M400 1037.5H1504M400 1078.5H1504" stroke="#a0a0a0" stroke-width="1" fill="none"/>
<polygon points="380,436 590,226 1196,226 1229,193 1600,193 1600,956 590,956 380,746" fill="#414141"/>
<polyline points="508,510 560,510 661,409 1118,409 1178,348" fill="none" stroke="#d8405a" stroke-width="10" stroke-linejoin="miter" stroke-linecap="round"/>
<polyline points="650,507 1060,507 1158,409 1218,409 1320,307" fill="none" stroke="#d8405a" stroke-width="10" stroke-linejoin="miter" stroke-linecap="round"/>
<polyline points="650,672 923,672 1167,428 1262,428 1321,370 1458,370 1522,306" fill="none" stroke="#d8405a" stroke-width="10" stroke-linejoin="miter" stroke-linecap="round"/>
<polyline points="1320,468 1530,468" fill="none" stroke="#d8405a" stroke-width="10" stroke-linejoin="miter" stroke-linecap="round"/>
<polyline points="1320,633 1530,633" fill="none" stroke="#d8405a" stroke-width="10" stroke-linejoin="miter" stroke-linecap="round"/>
<polyline points="1178,510 1186,518 1186,590 1424,828 1530,828" fill="none" stroke="#d8405a" stroke-width="10" stroke-linejoin="miter" stroke-linecap="round"/>
<polyline points="1178,828 1320,828" fill="none" stroke="#d8405a" stroke-width="10" stroke-linejoin="miter" stroke-linecap="round"/>
<polyline points="508,672 638,794 638,828 650,834" fill="none" stroke="#d8405a" stroke-width="10" stroke-linejoin="miter" stroke-linecap="round"/>
<polyline points="1178,347 1302,471 1320,471" fill="none" stroke="#1d87c7" stroke-width="10" stroke-linejoin="miter" stroke-linecap="round"/>
<polyline points="1178,671 1321,535 1360,535 1530,365" fill="none" stroke="#1d87c7" stroke-width="10" stroke-linejoin="miter" stroke-linecap="round"/>
<polyline points="1099,829 1186,738 1208,738 1315,631" fill="none" stroke="#1d87c7" stroke-width="10" stroke-linejoin="miter" stroke-linecap="round"/>
<polygon points="467,429 549,429 589,469 589,551 549,591 467,591 427,551 427,469" fill="none" stroke="rgba(208,208,208,0.8)" stroke-width="9.5"/>
<polygon points="467,591 549,591 589,631 589,713 549,753 467,753 427,713 427,631" fill="none" stroke="rgba(208,208,208,0.8)" stroke-width="9.5"/>
<polygon points="1279,227 1361,227 1401,267 1401,349 1361,389 1279,389 1239,349 1239,267" fill="none" stroke="rgba(208,208,208,0.8)" stroke-width="9.5"/>
<polygon points="1279,389 1361,389 1401,429 1401,511 1361,551 1279,551 1239,511 1239,429" fill="none" stroke="rgba(208,208,208,0.8)" stroke-width="9.5"/>
<polygon points="1279,551 1361,551 1401,591 1401,673 1361,713 1279,713 1239,673 1239,591" fill="none" stroke="rgba(208,208,208,0.8)" stroke-width="9.5"/>
<polygon points="1481,227 1563,227 1603,267 1603,349 1563,389 1481,389 1441,349 1441,267" fill="none" stroke="rgba(208,208,208,0.8)" stroke-width="9.5"/>
<polygon points="1481,389 1563,389 1603,429 1603,511 1563,551 1481,551 1441,511 1441,429" fill="none" stroke="rgba(208,208,208,0.8)" stroke-width="9.5"/>
<polygon points="1481,551 1563,551 1603,591 1603,673 1563,713 1481,713 1441,673 1441,591" fill="none" stroke="rgba(208,208,208,0.8)" stroke-width="9.5"/>
<polygon points="1279,753 1361,753 1401,793 1401,875 1361,915 1279,915 1239,875 1239,793" fill="none" stroke="rgba(208,208,208,0.8)" stroke-width="9.5"/>
<polygon points="1441,753 1523,753 1563,793 1563,875 1523,915 1441,915 1401,875 1401,793" fill="none" stroke="rgba(208,208,208,0.8)" stroke-width="9.5"/>
<rect x="703.5" y="267.5" width="421.5" height="648.5" fill="none" stroke="rgba(208,208,208,0.8)" stroke-width="9" stroke-linejoin="round"/>
<circle cx="575" cy="348" r="16" fill="rgba(208,208,208,0.8)"/>
<path d="M699 267.5H1129.5M699 916H1129.5M703.5 263V290M1125 263V290M703.5 893V920M1125 893V920" stroke="rgba(208,208,208,0.45)" stroke-width="9" fill="none"/>
<rect x="491.5" y="493.5" width="33" height="33" fill="rgba(208,208,208,0.8)"/>
<rect x="491.5" y="655.5" width="33" height="33" fill="rgba(208,208,208,0.8)"/>
<rect x="1303.5" y="291.5" width="33" height="33" fill="rgba(208,208,208,0.8)"/>
<rect x="1303.5" y="453.5" width="33" height="33" fill="rgba(208,208,208,0.8)"/>
<rect x="1303.5" y="615.5" width="33" height="33" fill="rgba(208,208,208,0.8)"/>
<rect x="1505.5" y="291.5" width="33" height="33" fill="rgba(208,208,208,0.8)"/>
<rect x="1505.5" y="453.5" width="33" height="33" fill="rgba(208,208,208,0.8)"/>
<rect x="1505.5" y="615.5" width="33" height="33" fill="rgba(208,208,208,0.8)"/>
<rect x="1303.5" y="817.5" width="33" height="33" fill="rgba(208,208,208,0.8)"/>
<rect x="1465.5" y="817.5" width="33" height="33" fill="rgba(208,208,208,0.8)"/>
<path transform="translate(432,314.6)" d="M5 0V78M0.5 4.5H59M5 38.5H56M0.5 73.5H62" stroke="rgba(208,208,208,0.8)" stroke-width="9" fill="none"/>
<path transform="translate(500,314.6)" d="M30.5 -5.5V86" stroke="rgba(208,208,208,0.8)" stroke-width="7" fill="none"/>
<path transform="translate(500,314.6)" d="M56 21C52 9 42 4.5 30 4.5C15 4.5 5 11 5 21C5 33 17 36 30 40C45 44 55 48 55 58C55 68 44 73.5 30 73.5C16 73.5 6 68 4.5 56" stroke="rgba(208,208,208,0.8)" stroke-width="9" fill="none"/>
<path transform="translate(570,314.6)" d="M25 0V78M24 5L3 21M0 73.5H49" stroke="rgba(208,208,208,0.8)" stroke-width="9" fill="none"/>
<path transform="translate(625,314.6)" d="M25 0V78M24 5L3 21M0 73.5H49" stroke="rgba(208,208,208,0.8)" stroke-width="9" fill="none"/>
<path transform="translate(432,476.8)" d="M5 0V78M0.5 4.5H59M5 38.5H56M0.5 73.5H62" stroke="rgba(208,208,208,0.8)" stroke-width="9" fill="none"/>
<path transform="translate(500,476.8)" d="M30.5 -5.5V86" stroke="rgba(208,208,208,0.8)" stroke-width="7" fill="none"/>
<path transform="translate(500,476.8)" d="M56 21C52 9 42 4.5 30 4.5C15 4.5 5 11 5 21C5 33 17 36 30 40C45 44 55 48 55 58C55 68 44 73.5 30 73.5C16 73.5 6 68 4.5 56" stroke="rgba(208,208,208,0.8)" stroke-width="9" fill="none"/>
<path transform="translate(570,476.8)" d="M25 0V78M24 5L3 21M0 73.5H49" stroke="rgba(208,208,208,0.8)" stroke-width="9" fill="none"/>
<path transform="translate(630,476.8)" d="M4.5 22C6 10 16 4.5 27 4.5C40 4.5 48 12 48 23C48 34 40 42 4.5 73.5H52" stroke="rgba(208,208,208,0.8)" stroke-width="9" fill="none"/>
<path transform="translate(822,140.6)" d="M5 0V78M0.5 4.5H59M5 38.5H56M0.5 73.5H62" stroke="rgba(208,208,208,0.8)" stroke-width="9" fill="none"/>
<path transform="translate(891,140.6)" d="M30.5 -5.5V86" stroke="rgba(208,208,208,0.8)" stroke-width="7" fill="none"/>
<path transform="translate(891,140.6)" d="M56 21C52 9 42 4.5 30 4.5C15 4.5 5 11 5 21C5 33 17 36 30 40C45 44 55 48 55 58C55 68 44 73.5 30 73.5C16 73.5 6 68 4.5 56" stroke="rgba(208,208,208,0.8)" stroke-width="9" fill="none"/>
<path transform="translate(961,140.6)" d="M25 0V78M24 5L3 21M0 73.5H49" stroke="rgba(208,208,208,0.8)" stroke-width="9" fill="none"/>
<path transform="translate(1243,274)" d="M5 0V78M0.5 4.5H59M5 38.5H56M0.5 73.5H62" stroke="rgba(208,208,208,0.8)" stroke-width="9" fill="none"/>
<path transform="translate(1311,274)" d="M30.5 -5.5V86" stroke="rgba(208,208,208,0.8)" stroke-width="7" fill="none"/>
<path transform="translate(1311,274)" d="M56 21C52 9 42 4.5 30 4.5C15 4.5 5 11 5 21C5 33 17 36 30 40C45 44 55 48 55 58C55 68 44 73.5 30 73.5C16 73.5 6 68 4.5 56" stroke="rgba(208,208,208,0.8)" stroke-width="9" fill="none"/>
<path transform="translate(1375,274)" d="M50 4.5H12L7 36C14 32 21 30 29 30C44 30 53 39 53 51C53 64 43 73.5 29 73.5C17 73.5 8 69 4 62" stroke="rgba(208,208,208,0.8)" stroke-width="9" fill="none"/>
<path transform="translate(1243,436)" d="M5 0V78M0.5 4.5H59M5 38.5H56M0.5 73.5H62" stroke="rgba(208,208,208,0.8)" stroke-width="9" fill="none"/>
<path transform="translate(1311,436)" d="M30.5 -5.5V86" stroke="rgba(208,208,208,0.8)" stroke-width="7" fill="none"/>
<path transform="translate(1311,436)" d="M56 21C52 9 42 4.5 30 4.5C15 4.5 5 11 5 21C5 33 17 36 30 40C45 44 55 48 55 58C55 68 44 73.5 30 73.5C16 73.5 6 68 4.5 56" stroke="rgba(208,208,208,0.8)" stroke-width="9" fill="none"/>
<path transform="translate(1375,436)" d="M41 0V78M41 4L4.5 56H57" stroke="rgba(208,208,208,0.8)" stroke-width="9" fill="none"/>
<path transform="translate(1242,639)" d="M5 0V78M0.5 4.5H59M5 38.5H56M0.5 73.5H62" stroke="rgba(208,208,208,0.8)" stroke-width="9" fill="none"/>
<path transform="translate(1311,639)" d="M30.5 -5.5V86" stroke="rgba(208,208,208,0.8)" stroke-width="7" fill="none"/>
<path transform="translate(1311,639)" d="M56 21C52 9 42 4.5 30 4.5C15 4.5 5 11 5 21C5 33 17 36 30 40C45 44 55 48 55 58C55 68 44 73.5 30 73.5C16 73.5 6 68 4.5 56" stroke="rgba(208,208,208,0.8)" stroke-width="9" fill="none"/>
<path transform="translate(1384,639)" d="M25 0V78M24 5L3 21M0 73.5H49" stroke="rgba(208,208,208,0.8)" stroke-width="9" fill="none"/>
<path transform="translate(1445,639)" d="M6 12C12 6 20 4.5 28 4.5C42 4.5 50 11 50 21C50 32 41 38 27 38C45 38 54 45 54 56C54 67 44 73.5 29 73.5C17 73.5 8 69 4 62" stroke="rgba(208,208,208,0.8)" stroke-width="9" fill="none"/>
<path transform="translate(1445,274)" d="M5 0V78M0.5 4.5H59M5 38.5H56M0.5 73.5H62" stroke="rgba(208,208,208,0.8)" stroke-width="9" fill="none"/>
<path transform="translate(1445,436)" d="M5 0V78M0.5 4.5H59M5 38.5H56M0.5 73.5H62" stroke="rgba(208,208,208,0.8)" stroke-width="9" fill="none"/>
<path transform="translate(1405,639)" d="M5 0V78M0.5 4.5H59M5 38.5H56M0.5 73.5H62" stroke="rgba(208,208,208,0.8)" stroke-width="9" fill="none"/>
<rect x="915" y="226" width="9" height="8" fill="rgba(208,208,208,0.8)"/>
<circle cx="650" cy="348" r="34.5" fill="none" stroke="rgba(102,224,131,0.68)" stroke-width="20"/>
<circle cx="650" cy="510" r="34.5" fill="none" stroke="rgba(102,224,131,0.68)" stroke-width="20"/>
<circle cx="650" cy="672" r="34.5" fill="none" stroke="rgba(102,224,131,0.68)" stroke-width="20"/>
<circle cx="650" cy="834" r="34.5" fill="none" stroke="rgba(102,224,131,0.68)" stroke-width="20"/>
<circle cx="1178" cy="348" r="34.5" fill="none" stroke="rgba(102,224,131,0.68)" stroke-width="20"/>
<circle cx="1178" cy="510" r="34.5" fill="none" stroke="rgba(102,224,131,0.68)" stroke-width="20"/>
<circle cx="1178" cy="672" r="34.5" fill="none" stroke="rgba(102,224,131,0.68)" stroke-width="20"/>
<circle cx="1178" cy="834" r="34.5" fill="none" stroke="rgba(102,224,131,0.68)" stroke-width="20"/>
<path d="M487.5 460.6 L528.5 460.6 L557.4 489.5 L557.4 530.5 L528.5 559.4 L487.5 559.4 L458.6 530.5 L458.6 489.5ZM476.7 510a31.3 31.3 0 1 0 62.6 0a31.3 31.3 0 1 0 -62.6 0Z" fill="rgba(102,224,131,0.68)" fill-rule="evenodd"/>
<path d="M487.5 622.6 L528.5 622.6 L557.4 651.5 L557.4 692.5 L528.5 721.4 L487.5 721.4 L458.6 692.5 L458.6 651.5ZM476.7 672a31.3 31.3 0 1 0 62.6 0a31.3 31.3 0 1 0 -62.6 0Z" fill="rgba(102,224,131,0.68)" fill-rule="evenodd"/>
<path d="M1299.5 258.6 L1340.5 258.6 L1369.4 287.5 L1369.4 328.5 L1340.5 357.4 L1299.5 357.4 L1270.6 328.5 L1270.6 287.5ZM1288.7 308a31.3 31.3 0 1 0 62.6 0a31.3 31.3 0 1 0 -62.6 0Z" fill="rgba(102,224,131,0.68)" fill-rule="evenodd"/>
<path d="M1299.5 420.6 L1340.5 420.6 L1369.4 449.5 L1369.4 490.5 L1340.5 519.4 L1299.5 519.4 L1270.6 490.5 L1270.6 449.5ZM1288.7 470a31.3 31.3 0 1 0 62.6 0a31.3 31.3 0 1 0 -62.6 0Z" fill="rgba(102,224,131,0.68)" fill-rule="evenodd"/>
<path d="M1299.5 582.6 L1340.5 582.6 L1369.4 611.5 L1369.4 652.5 L1340.5 681.4 L1299.5 681.4 L1270.6 652.5 L1270.6 611.5ZM1288.7 632a31.3 31.3 0 1 0 62.6 0a31.3 31.3 0 1 0 -62.6 0Z" fill="rgba(102,224,131,0.68)" fill-rule="evenodd"/>
<path d="M1501.5 258.6 L1542.5 258.6 L1571.4 287.5 L1571.4 328.5 L1542.5 357.4 L1501.5 357.4 L1472.6 328.5 L1472.6 287.5ZM1490.7 308a31.3 31.3 0 1 0 62.6 0a31.3 31.3 0 1 0 -62.6 0Z" fill="rgba(102,224,131,0.68)" fill-rule="evenodd"/>
<path d="M1501.5 420.6 L1542.5 420.6 L1571.4 449.5 L1571.4 490.5 L1542.5 519.4 L1501.5 519.4 L1472.6 490.5 L1472.6 449.5ZM1490.7 470a31.3 31.3 0 1 0 62.6 0a31.3 31.3 0 1 0 -62.6 0Z" fill="rgba(102,224,131,0.68)" fill-rule="evenodd"/>
<path d="M1501.5 582.6 L1542.5 582.6 L1571.4 611.5 L1571.4 652.5 L1542.5 681.4 L1501.5 681.4 L1472.6 652.5 L1472.6 611.5ZM1490.7 632a31.3 31.3 0 1 0 62.6 0a31.3 31.3 0 1 0 -62.6 0Z" fill="rgba(102,224,131,0.68)" fill-rule="evenodd"/>
<path d="M1299.5 784.6 L1340.5 784.6 L1369.4 813.5 L1369.4 854.5 L1340.5 883.4 L1299.5 883.4 L1270.6 854.5 L1270.6 813.5ZM1288.7 834a31.3 31.3 0 1 0 62.6 0a31.3 31.3 0 1 0 -62.6 0Z" fill="rgba(102,224,131,0.68)" fill-rule="evenodd"/>
<path d="M1461.5 784.6 L1502.5 784.6 L1531.4 813.5 L1531.4 854.5 L1502.5 883.4 L1461.5 883.4 L1432.6 854.5 L1432.6 813.5ZM1450.7 834a31.3 31.3 0 1 0 62.6 0a31.3 31.3 0 1 0 -62.6 0Z" fill="rgba(102,224,131,0.68)" fill-rule="evenodd"/>
<polygon points="380,436 590,226 1196,226 1229,193 1600,193 1600,956 590,956 380,746" fill="none" stroke="rgba(102,224,131,0.68)" stroke-width="10"/>
<g fill="none" stroke="#a2a2a2" stroke-width="7.61"><path transform="translate(642.38,338.00) scale(0.2628)" d="M25 0V78M24 5L3 21M0 73.5H49"/></g>
<g fill="none" stroke="#a2a2a2" stroke-width="7.61"><path transform="translate(642.38,488.00) scale(0.2628)" d="M4.5 22C6 10 16 4.5 27 4.5C40 4.5 48 12 48 23C48 34 40 42 4.5 73.5H52"/></g>
<g fill="none" stroke="#a2a2a2" stroke-width="7.80"><path transform="translate(623.59,512.70) scale(0.2564)" d="M56 21C52 9 42 4.5 30 4.5C15 4.5 5 11 5 21C5 33 17 36 30 40C45 44 55 48 55 58C55 68 44 73.5 30 73.5C16 73.5 6 68 4.5 56"/><path transform="translate(642.56,512.70) scale(0.2564)" d="M30.5 -4V82M56 21C52 9 42 4.5 30 4.5C15 4.5 5 11 5 21C5 33 17 36 30 40C45 44 55 48 55 58C55 68 44 73.5 30 73.5C16 73.5 6 68 4.5 56"/><path transform="translate(661.54,512.70) scale(0.2564)" d="M50 4.5H12L7 36C14 32 21 30 29 30C44 30 53 39 53 51C53 64 43 73.5 29 73.5C17 73.5 8 69 4 62"/></g>
<g fill="none" stroke="#a2a2a2" stroke-width="7.61"><path transform="translate(642.38,650.00) scale(0.2628)" d="M6 12C12 6 20 4.5 28 4.5C42 4.5 50 11 50 21C50 32 41 38 27 38C45 38 54 45 54 56C54 67 44 73.5 29 73.5C17 73.5 8 69 4 62"/></g>
<g fill="none" stroke="#a2a2a2" stroke-width="7.80"><path transform="translate(623.59,674.70) scale(0.2564)" d="M56 21C52 9 42 4.5 30 4.5C15 4.5 5 11 5 21C5 33 17 36 30 40C45 44 55 48 55 58C55 68 44 73.5 30 73.5C16 73.5 6 68 4.5 56"/><path transform="translate(642.56,674.70) scale(0.2564)" d="M30.5 -4V82M56 21C52 9 42 4.5 30 4.5C15 4.5 5 11 5 21C5 33 17 36 30 40C45 44 55 48 55 58C55 68 44 73.5 30 73.5C16 73.5 6 68 4.5 56"/><path transform="translate(661.54,674.70) scale(0.2564)" d="M48 10C44 6 36 4.5 28 4.5C12 4.5 5 20 5 40C5 62 14 73.5 29 73.5C44 73.5 53 64 53 51C53 38 44 30 30 30C18 30 8 36 5 46"/></g>
<g fill="none" stroke="#a2a2a2" stroke-width="7.61"><path transform="translate(642.38,812.00) scale(0.2628)" d="M41 0V78M41 4L4.5 56H57"/></g>
<g fill="none" stroke="#a2a2a2" stroke-width="7.80"><path transform="translate(623.59,836.70) scale(0.2564)" d="M56 21C52 9 42 4.5 30 4.5C15 4.5 5 11 5 21C5 33 17 36 30 40C45 44 55 48 55 58C55 68 44 73.5 30 73.5C16 73.5 6 68 4.5 56"/><path transform="translate(642.56,836.70) scale(0.2564)" d="M30.5 -4V82M56 21C52 9 42 4.5 30 4.5C15 4.5 5 11 5 21C5 33 17 36 30 40C45 44 55 48 55 58C55 68 44 73.5 30 73.5C16 73.5 6 68 4.5 56"/><path transform="translate(661.54,836.70) scale(0.2564)" d="M25 0V78M24 5L3 21M0 73.5H49"/></g>
<g fill="none" stroke="#a2a2a2" stroke-width="7.61"><path transform="translate(1170.38,326.00) scale(0.2628)" d="M29 38C16 38 8 31 8 21C8 11 17 4.5 29 4.5C41 4.5 50 11 50 21C50 31 42 38 29 38C14 38 5 46 5 56C5 67 15 73.5 29 73.5C43 73.5 53 67 53 56C53 46 44 38 29 38Z"/></g>
<g fill="none" stroke="#a2a2a2" stroke-width="7.80"><path transform="translate(1151.59,350.70) scale(0.2564)" d="M56 21C52 9 42 4.5 30 4.5C15 4.5 5 11 5 21C5 33 17 36 30 40C45 44 55 48 55 58C55 68 44 73.5 30 73.5C16 73.5 6 68 4.5 56"/><path transform="translate(1170.56,350.70) scale(0.2564)" d="M30.5 -4V82M56 21C52 9 42 4.5 30 4.5C15 4.5 5 11 5 21C5 33 17 36 30 40C45 44 55 48 55 58C55 68 44 73.5 30 73.5C16 73.5 6 68 4.5 56"/><path transform="translate(1189.54,350.70) scale(0.2564)" d="M4.5 22C6 10 16 4.5 27 4.5C40 4.5 48 12 48 23C48 34 40 42 4.5 73.5H52"/></g>
<g fill="none" stroke="#a2a2a2" stroke-width="7.61"><path transform="translate(1170.38,488.00) scale(0.2628)" d="M4.5 4.5H54L22 78"/></g>
<g fill="none" stroke="#a2a2a2" stroke-width="7.80"><path transform="translate(1151.59,512.70) scale(0.2564)" d="M56 21C52 9 42 4.5 30 4.5C15 4.5 5 11 5 21C5 33 17 36 30 40C45 44 55 48 55 58C55 68 44 73.5 30 73.5C16 73.5 6 68 4.5 56"/><path transform="translate(1170.56,512.70) scale(0.2564)" d="M30.5 -4V82M56 21C52 9 42 4.5 30 4.5C15 4.5 5 11 5 21C5 33 17 36 30 40C45 44 55 48 55 58C55 68 44 73.5 30 73.5C16 73.5 6 68 4.5 56"/><path transform="translate(1189.54,512.70) scale(0.2564)" d="M6 12C12 6 20 4.5 28 4.5C42 4.5 50 11 50 21C50 32 41 38 27 38C45 38 54 45 54 56C54 67 44 73.5 29 73.5C17 73.5 8 69 4 62"/></g>
<g fill="none" stroke="#a2a2a2" stroke-width="7.61"><path transform="translate(1170.38,650.00) scale(0.2628)" d="M48 10C44 6 36 4.5 28 4.5C12 4.5 5 20 5 40C5 62 14 73.5 29 73.5C44 73.5 53 64 53 51C53 38 44 30 30 30C18 30 8 36 5 46"/></g>
<g fill="none" stroke="#a2a2a2" stroke-width="7.80"><path transform="translate(1151.59,674.70) scale(0.2564)" d="M56 21C52 9 42 4.5 30 4.5C15 4.5 5 11 5 21C5 33 17 36 30 40C45 44 55 48 55 58C55 68 44 73.5 30 73.5C16 73.5 6 68 4.5 56"/><path transform="translate(1170.56,674.70) scale(0.2564)" d="M30.5 -4V82M56 21C52 9 42 4.5 30 4.5C15 4.5 5 11 5 21C5 33 17 36 30 40C45 44 55 48 55 58C55 68 44 73.5 30 73.5C16 73.5 6 68 4.5 56"/><path transform="translate(1189.54,674.70) scale(0.2564)" d="M4.5 4.5H54L22 78"/></g>
<g fill="none" stroke="#a2a2a2" stroke-width="7.61"><path transform="translate(1170.38,812.00) scale(0.2628)" d="M50 4.5H12L7 36C14 32 21 30 29 30C44 30 53 39 53 51C53 64 43 73.5 29 73.5C17 73.5 8 69 4 62"/></g>
<g fill="none" stroke="#a2a2a2" stroke-width="7.80"><path transform="translate(1151.59,836.70) scale(0.2564)" d="M56 21C52 9 42 4.5 30 4.5C15 4.5 5 11 5 21C5 33 17 36 30 40C45 44 55 48 55 58C55 68 44 73.5 30 73.5C16 73.5 6 68 4.5 56"/><path transform="translate(1170.56,836.70) scale(0.2564)" d="M30.5 -4V82M56 21C52 9 42 4.5 30 4.5C15 4.5 5 11 5 21C5 33 17 36 30 40C45 44 55 48 55 58C55 68 44 73.5 30 73.5C16 73.5 6 68 4.5 56"/><path transform="translate(1189.54,836.70) scale(0.2564)" d="M41 0V78M41 4L4.5 56H57"/></g>
<g fill="none" stroke="#a2a2a2" stroke-width="7.61"><path transform="translate(500.38,488.00) scale(0.2628)" d="M25 0V78M24 5L3 21M0 73.5H49"/></g>
<g fill="none" stroke="#a2a2a2" stroke-width="7.80"><path transform="translate(481.59,512.70) scale(0.2564)" d="M56 21C52 9 42 4.5 30 4.5C15 4.5 5 11 5 21C5 33 17 36 30 40C45 44 55 48 55 58C55 68 44 73.5 30 73.5C16 73.5 6 68 4.5 56"/><path transform="translate(500.56,512.70) scale(0.2564)" d="M30.5 -4V82M56 21C52 9 42 4.5 30 4.5C15 4.5 5 11 5 21C5 33 17 36 30 40C45 44 55 48 55 58C55 68 44 73.5 30 73.5C16 73.5 6 68 4.5 56"/><path transform="translate(519.54,512.70) scale(0.2564)" d="M4.5 22C6 10 16 4.5 27 4.5C40 4.5 48 12 48 23C48 34 40 42 4.5 73.5H52"/></g>
<g fill="none" stroke="#a2a2a2" stroke-width="7.61"><path transform="translate(500.38,650.00) scale(0.2628)" d="M25 0V78M24 5L3 21M0 73.5H49"/></g>
<g fill="none" stroke="#a2a2a2" stroke-width="7.80"><path transform="translate(481.59,674.70) scale(0.2564)" d="M56 21C52 9 42 4.5 30 4.5C15 4.5 5 11 5 21C5 33 17 36 30 40C45 44 55 48 55 58C55 68 44 73.5 30 73.5C16 73.5 6 68 4.5 56"/><path transform="translate(500.56,674.70) scale(0.2564)" d="M30.5 -4V82M56 21C52 9 42 4.5 30 4.5C15 4.5 5 11 5 21C5 33 17 36 30 40C45 44 55 48 55 58C55 68 44 73.5 30 73.5C16 73.5 6 68 4.5 56"/><path transform="translate(519.54,674.70) scale(0.2564)" d="M25 0V78M24 5L3 21M0 73.5H49"/></g>
<g fill="none" stroke="#a2a2a2" stroke-width="7.61"><path transform="translate(1312.38,286.00) scale(0.2628)" d="M25 0V78M24 5L3 21M0 73.5H49"/></g>
<g fill="none" stroke="#a2a2a2" stroke-width="7.80"><path transform="translate(1293.59,310.70) scale(0.2564)" d="M56 21C52 9 42 4.5 30 4.5C15 4.5 5 11 5 21C5 33 17 36 30 40C45 44 55 48 55 58C55 68 44 73.5 30 73.5C16 73.5 6 68 4.5 56"/><path transform="translate(1312.56,310.70) scale(0.2564)" d="M30.5 -4V82M56 21C52 9 42 4.5 30 4.5C15 4.5 5 11 5 21C5 33 17 36 30 40C45 44 55 48 55 58C55 68 44 73.5 30 73.5C16 73.5 6 68 4.5 56"/><path transform="translate(1331.54,310.70) scale(0.2564)" d="M50 4.5H12L7 36C14 32 21 30 29 30C44 30 53 39 53 51C53 64 43 73.5 29 73.5C17 73.5 8 69 4 62"/></g>
<g fill="none" stroke="#a2a2a2" stroke-width="7.61"><path transform="translate(1312.38,448.00) scale(0.2628)" d="M25 0V78M24 5L3 21M0 73.5H49"/></g>
<g fill="none" stroke="#a2a2a2" stroke-width="7.80"><path transform="translate(1293.59,472.70) scale(0.2564)" d="M56 21C52 9 42 4.5 30 4.5C15 4.5 5 11 5 21C5 33 17 36 30 40C45 44 55 48 55 58C55 68 44 73.5 30 73.5C16 73.5 6 68 4.5 56"/><path transform="translate(1312.56,472.70) scale(0.2564)" d="M30.5 -4V82M56 21C52 9 42 4.5 30 4.5C15 4.5 5 11 5 21C5 33 17 36 30 40C45 44 55 48 55 58C55 68 44 73.5 30 73.5C16 73.5 6 68 4.5 56"/><path transform="translate(1331.54,472.70) scale(0.2564)" d="M4.5 22C6 10 16 4.5 27 4.5C40 4.5 48 12 48 23C48 34 40 42 4.5 73.5H52"/></g>
<g fill="none" stroke="#a2a2a2" stroke-width="7.61"><path transform="translate(1312.38,610.00) scale(0.2628)" d="M25 0V78M24 5L3 21M0 73.5H49"/></g>
<g fill="none" stroke="#a2a2a2" stroke-width="7.80"><path transform="translate(1293.59,634.70) scale(0.2564)" d="M56 21C52 9 42 4.5 30 4.5C15 4.5 5 11 5 21C5 33 17 36 30 40C45 44 55 48 55 58C55 68 44 73.5 30 73.5C16 73.5 6 68 4.5 56"/><path transform="translate(1312.56,634.70) scale(0.2564)" d="M30.5 -4V82M56 21C52 9 42 4.5 30 4.5C15 4.5 5 11 5 21C5 33 17 36 30 40C45 44 55 48 55 58C55 68 44 73.5 30 73.5C16 73.5 6 68 4.5 56"/><path transform="translate(1331.54,634.70) scale(0.2564)" d="M25 0V78M24 5L3 21M0 73.5H49"/></g>
<g fill="none" stroke="#a2a2a2" stroke-width="7.61"><path transform="translate(1312.38,812.00) scale(0.2628)" d="M25 0V78M24 5L3 21M0 73.5H49"/></g>
<g fill="none" stroke="#a2a2a2" stroke-width="7.80"><path transform="translate(1293.59,836.70) scale(0.2564)" d="M56 21C52 9 42 4.5 30 4.5C15 4.5 5 11 5 21C5 33 17 36 30 40C45 44 55 48 55 58C55 68 44 73.5 30 73.5C16 73.5 6 68 4.5 56"/><path transform="translate(1312.56,836.70) scale(0.2564)" d="M30.5 -4V82M56 21C52 9 42 4.5 30 4.5C15 4.5 5 11 5 21C5 33 17 36 30 40C45 44 55 48 55 58C55 68 44 73.5 30 73.5C16 73.5 6 68 4.5 56"/><path transform="translate(1331.54,836.70) scale(0.2564)" d="M41 0V78M41 4L4.5 56H57"/></g>
<g fill="none" stroke="#a2a2a2" stroke-width="7.61"><path transform="translate(1474.38,812.00) scale(0.2628)" d="M25 0V78M24 5L3 21M0 73.5H49"/></g>
<g fill="none" stroke="#a2a2a2" stroke-width="7.80"><path transform="translate(1455.59,836.70) scale(0.2564)" d="M56 21C52 9 42 4.5 30 4.5C15 4.5 5 11 5 21C5 33 17 36 30 40C45 44 55 48 55 58C55 68 44 73.5 30 73.5C16 73.5 6 68 4.5 56"/><path transform="translate(1474.56,836.70) scale(0.2564)" d="M30.5 -4V82M56 21C52 9 42 4.5 30 4.5C15 4.5 5 11 5 21C5 33 17 36 30 40C45 44 55 48 55 58C55 68 44 73.5 30 73.5C16 73.5 6 68 4.5 56"/><path transform="translate(1493.54,836.70) scale(0.2564)" d="M6 12C12 6 20 4.5 28 4.5C42 4.5 50 11 50 21C50 32 41 38 27 38C45 38 54 45 54 56C54 67 44 73.5 29 73.5C17 73.5 8 69 4 62"/></g>
<g fill="none" stroke="#a2a2a2" stroke-width="7.61"><path transform="translate(1514.38,448.00) scale(0.2628)" d="M25 0V78M24 5L3 21M0 73.5H49"/></g>
<g fill="none" stroke="#a2a2a2" stroke-width="7.80"><path transform="translate(1495.59,472.70) scale(0.2564)" d="M56 21C52 9 42 4.5 30 4.5C15 4.5 5 11 5 21C5 33 17 36 30 40C45 44 55 48 55 58C55 68 44 73.5 30 73.5C16 73.5 6 68 4.5 56"/><path transform="translate(1514.56,472.70) scale(0.2564)" d="M30.5 -4V82M56 21C52 9 42 4.5 30 4.5C15 4.5 5 11 5 21C5 33 17 36 30 40C45 44 55 48 55 58C55 68 44 73.5 30 73.5C16 73.5 6 68 4.5 56"/><path transform="translate(1533.54,472.70) scale(0.2564)" d="M4.5 22C6 10 16 4.5 27 4.5C40 4.5 48 12 48 23C48 34 40 42 4.5 73.5H52"/></g>
<g fill="none" stroke="#a2a2a2" stroke-width="7.61"><path transform="translate(1514.38,610.00) scale(0.2628)" d="M25 0V78M24 5L3 21M0 73.5H49"/></g>
<g fill="none" stroke="#a2a2a2" stroke-width="7.80"><path transform="translate(1495.59,634.70) scale(0.2564)" d="M56 21C52 9 42 4.5 30 4.5C15 4.5 5 11 5 21C5 33 17 36 30 40C45 44 55 48 55 58C55 68 44 73.5 30 73.5C16 73.5 6 68 4.5 56"/><path transform="translate(1514.56,634.70) scale(0.2564)" d="M30.5 -4V82M56 21C52 9 42 4.5 30 4.5C15 4.5 5 11 5 21C5 33 17 36 30 40C45 44 55 48 55 58C55 68 44 73.5 30 73.5C16 73.5 6 68 4.5 56"/><path transform="translate(1533.54,634.70) scale(0.2564)" d="M25 0V78M24 5L3 21M0 73.5H49"/></g>
<g fill="none" stroke="#a2a2a2" stroke-width="7.61"><path transform="translate(1514.38,286.00) scale(0.2628)" d="M25 0V78M24 5L3 21M0 73.5H49"/></g>
<g fill="none" stroke="#a2a2a2" stroke-width="7.80"><path transform="translate(1495.59,310.70) scale(0.2564)" d="M56 21C52 9 42 4.5 30 4.5C15 4.5 5 11 5 21C5 33 17 36 30 40C45 44 55 48 55 58C55 68 44 73.5 30 73.5C16 73.5 6 68 4.5 56"/><path transform="translate(1514.56,310.70) scale(0.2564)" d="M30.5 -4V82M56 21C52 9 42 4.5 30 4.5C15 4.5 5 11 5 21C5 33 17 36 30 40C45 44 55 48 55 58C55 68 44 73.5 30 73.5C16 73.5 6 68 4.5 56"/><path transform="translate(1533.54,310.70) scale(0.2564)" d="M48 10C44 6 36 4.5 28 4.5C12 4.5 5 20 5 40C5 62 14 73.5 29 73.5C44 73.5 53 64 53 51C53 38 44 30 30 30C18 30 8 36 5 46"/></g>
<g fill="none" stroke="rgba(205,205,205,0.9)" stroke-width="9.75"><path transform="translate(765.87,405.00) scale(0.1026)" d="M56 21C52 9 42 4.5 30 4.5C15 4.5 5 11 5 21C5 33 17 36 30 40C45 44 55 48 55 58C55 68 44 73.5 30 73.5C16 73.5 6 68 4.5 56"/><path transform="translate(772.03,405.00) scale(0.1026)" d="M30.5 -4V82M56 21C52 9 42 4.5 30 4.5C15 4.5 5 11 5 21C5 33 17 36 30 40C45 44 55 48 55 58C55 68 44 73.5 30 73.5C16 73.5 6 68 4.5 56"/><path transform="translate(778.18,405.00) scale(0.1026)" d="M4.5 22C6 10 16 4.5 27 4.5C40 4.5 48 12 48 23C48 34 40 42 4.5 73.5H52"/></g>
<g fill="none" stroke="rgba(205,205,205,0.9)" stroke-width="9.75"><path transform="translate(879.87,405.00) scale(0.1026)" d="M56 21C52 9 42 4.5 30 4.5C15 4.5 5 11 5 21C5 33 17 36 30 40C45 44 55 48 55 58C55 68 44 73.5 30 73.5C16 73.5 6 68 4.5 56"/><path transform="translate(886.03,405.00) scale(0.1026)" d="M30.5 -4V82M56 21C52 9 42 4.5 30 4.5C15 4.5 5 11 5 21C5 33 17 36 30 40C45 44 55 48 55 58C55 68 44 73.5 30 73.5C16 73.5 6 68 4.5 56"/><path transform="translate(892.18,405.00) scale(0.1026)" d="M4.5 22C6 10 16 4.5 27 4.5C40 4.5 48 12 48 23C48 34 40 42 4.5 73.5H52"/></g>
<g fill="none" stroke="rgba(205,205,205,0.9)" stroke-width="9.75"><path transform="translate(994.87,405.00) scale(0.1026)" d="M56 21C52 9 42 4.5 30 4.5C15 4.5 5 11 5 21C5 33 17 36 30 40C45 44 55 48 55 58C55 68 44 73.5 30 73.5C16 73.5 6 68 4.5 56"/><path transform="translate(1001.03,405.00) scale(0.1026)" d="M30.5 -4V82M56 21C52 9 42 4.5 30 4.5C15 4.5 5 11 5 21C5 33 17 36 30 40C45 44 55 48 55 58C55 68 44 73.5 30 73.5C16 73.5 6 68 4.5 56"/><path transform="translate(1007.18,405.00) scale(0.1026)" d="M4.5 22C6 10 16 4.5 27 4.5C40 4.5 48 12 48 23C48 34 40 42 4.5 73.5H52"/></g>
<g fill="none" stroke="rgba(205,205,205,0.9)" stroke-width="9.75"><path transform="translate(743.87,503.00) scale(0.1026)" d="M56 21C52 9 42 4.5 30 4.5C15 4.5 5 11 5 21C5 33 17 36 30 40C45 44 55 48 55 58C55 68 44 73.5 30 73.5C16 73.5 6 68 4.5 56"/><path transform="translate(750.03,503.00) scale(0.1026)" d="M30.5 -4V82M56 21C52 9 42 4.5 30 4.5C15 4.5 5 11 5 21C5 33 17 36 30 40C45 44 55 48 55 58C55 68 44 73.5 30 73.5C16 73.5 6 68 4.5 56"/><path transform="translate(756.18,503.00) scale(0.1026)" d="M50 4.5H12L7 36C14 32 21 30 29 30C44 30 53 39 53 51C53 64 43 73.5 29 73.5C17 73.5 8 69 4 62"/></g>
<g fill="none" stroke="rgba(205,205,205,0.9)" stroke-width="9.75"><path transform="translate(845.87,503.00) scale(0.1026)" d="M56 21C52 9 42 4.5 30 4.5C15 4.5 5 11 5 21C5 33 17 36 30 40C45 44 55 48 55 58C55 68 44 73.5 30 73.5C16 73.5 6 68 4.5 56"/><path transform="translate(852.03,503.00) scale(0.1026)" d="M30.5 -4V82M56 21C52 9 42 4.5 30 4.5C15 4.5 5 11 5 21C5 33 17 36 30 40C45 44 55 48 55 58C55 68 44 73.5 30 73.5C16 73.5 6 68 4.5 56"/><path transform="translate(858.18,503.00) scale(0.1026)" d="M50 4.5H12L7 36C14 32 21 30 29 30C44 30 53 39 53 51C53 64 43 73.5 29 73.5C17 73.5 8 69 4 62"/></g>
<g fill="none" stroke="rgba(205,205,205,0.9)" stroke-width="9.75"><path transform="translate(947.87,503.00) scale(0.1026)" d="M56 21C52 9 42 4.5 30 4.5C15 4.5 5 11 5 21C5 33 17 36 30 40C45 44 55 48 55 58C55 68 44 73.5 30 73.5C16 73.5 6 68 4.5 56"/><path transform="translate(954.03,503.00) scale(0.1026)" d="M30.5 -4V82M56 21C52 9 42 4.5 30 4.5C15 4.5 5 11 5 21C5 33 17 36 30 40C45 44 55 48 55 58C55 68 44 73.5 30 73.5C16 73.5 6 68 4.5 56"/><path transform="translate(960.18,503.00) scale(0.1026)" d="M50 4.5H12L7 36C14 32 21 30 29 30C44 30 53 39 53 51C53 64 43 73.5 29 73.5C17 73.5 8 69 4 62"/></g>
<g fill="none" stroke="rgba(205,205,205,0.9)" stroke-width="9.75"><path transform="translate(731.87,668.00) scale(0.1026)" d="M56 21C52 9 42 4.5 30 4.5C15 4.5 5 11 5 21C5 33 17 36 30 40C45 44 55 48 55 58C55 68 44 73.5 30 73.5C16 73.5 6 68 4.5 56"/><path transform="translate(738.03,668.00) scale(0.1026)" d="M30.5 -4V82M56 21C52 9 42 4.5 30 4.5C15 4.5 5 11 5 21C5 33 17 36 30 40C45 44 55 48 55 58C55 68 44 73.5 30 73.5C16 73.5 6 68 4.5 56"/><path transform="translate(744.18,668.00) scale(0.1026)" d="M48 10C44 6 36 4.5 28 4.5C12 4.5 5 20 5 40C5 62 14 73.5 29 73.5C44 73.5 53 64 53 51C53 38 44 30 30 30C18 30 8 36 5 46"/></g>
<g fill="none" stroke="rgba(205,205,205,0.9)" stroke-width="9.75"><path transform="translate(822.87,668.00) scale(0.1026)" d="M56 21C52 9 42 4.5 30 4.5C15 4.5 5 11 5 21C5 33 17 36 30 40C45 44 55 48 55 58C55 68 44 73.5 30 73.5C16 73.5 6 68 4.5 56"/><path transform="translate(829.03,668.00) scale(0.1026)" d="M30.5 -4V82M56 21C52 9 42 4.5 30 4.5C15 4.5 5 11 5 21C5 33 17 36 30 40C45 44 55 48 55 58C55 68 44 73.5 30 73.5C16 73.5 6 68 4.5 56"/><path transform="translate(835.18,668.00) scale(0.1026)" d="M48 10C44 6 36 4.5 28 4.5C12 4.5 5 20 5 40C5 62 14 73.5 29 73.5C44 73.5 53 64 53 51C53 38 44 30 30 30C18 30 8 36 5 46"/></g>
<g fill="none" stroke="rgba(205,205,205,0.9)" stroke-width="9.75"><path transform="translate(1176.87,405.00) scale(0.1026)" d="M56 21C52 9 42 4.5 30 4.5C15 4.5 5 11 5 21C5 33 17 36 30 40C45 44 55 48 55 58C55 68 44 73.5 30 73.5C16 73.5 6 68 4.5 56"/><path transform="translate(1183.03,405.00) scale(0.1026)" d="M30.5 -4V82M56 21C52 9 42 4.5 30 4.5C15 4.5 5 11 5 21C5 33 17 36 30 40C45 44 55 48 55 58C55 68 44 73.5 30 73.5C16 73.5 6 68 4.5 56"/><path transform="translate(1189.18,405.00) scale(0.1026)" d="M50 4.5H12L7 36C14 32 21 30 29 30C44 30 53 39 53 51C53 64 43 73.5 29 73.5C17 73.5 8 69 4 62"/></g>
<g fill="none" stroke="rgba(205,205,205,0.9)" stroke-width="9.75"><path transform="translate(1204.87,424.00) scale(0.1026)" d="M56 21C52 9 42 4.5 30 4.5C15 4.5 5 11 5 21C5 33 17 36 30 40C45 44 55 48 55 58C55 68 44 73.5 30 73.5C16 73.5 6 68 4.5 56"/><path transform="translate(1211.03,424.00) scale(0.1026)" d="M30.5 -4V82M56 21C52 9 42 4.5 30 4.5C15 4.5 5 11 5 21C5 33 17 36 30 40C45 44 55 48 55 58C55 68 44 73.5 30 73.5C16 73.5 6 68 4.5 56"/><path transform="translate(1217.18,424.00) scale(0.1026)" d="M48 10C44 6 36 4.5 28 4.5C12 4.5 5 20 5 40C5 62 14 73.5 29 73.5C44 73.5 53 64 53 51C53 38 44 30 30 30C18 30 8 36 5 46"/></g>
<g fill="none" stroke="rgba(205,205,205,0.9)" stroke-width="9.75"><path transform="translate(1381.87,366.00) scale(0.1026)" d="M56 21C52 9 42 4.5 30 4.5C15 4.5 5 11 5 21C5 33 17 36 30 40C45 44 55 48 55 58C55 68 44 73.5 30 73.5C16 73.5 6 68 4.5 56"/><path transform="translate(1388.03,366.00) scale(0.1026)" d="M30.5 -4V82M56 21C52 9 42 4.5 30 4.5C15 4.5 5 11 5 21C5 33 17 36 30 40C45 44 55 48 55 58C55 68 44 73.5 30 73.5C16 73.5 6 68 4.5 56"/><path transform="translate(1394.18,366.00) scale(0.1026)" d="M48 10C44 6 36 4.5 28 4.5C12 4.5 5 20 5 40C5 62 14 73.5 29 73.5C44 73.5 53 64 53 51C53 38 44 30 30 30C18 30 8 36 5 46"/></g>
<g fill="none" stroke="rgba(205,205,205,0.9)" stroke-width="9.75"><path transform="translate(1410.87,464.00) scale(0.1026)" d="M56 21C52 9 42 4.5 30 4.5C15 4.5 5 11 5 21C5 33 17 36 30 40C45 44 55 48 55 58C55 68 44 73.5 30 73.5C16 73.5 6 68 4.5 56"/><path transform="translate(1417.03,464.00) scale(0.1026)" d="M30.5 -4V82M56 21C52 9 42 4.5 30 4.5C15 4.5 5 11 5 21C5 33 17 36 30 40C45 44 55 48 55 58C55 68 44 73.5 30 73.5C16 73.5 6 68 4.5 56"/><path transform="translate(1423.18,464.00) scale(0.1026)" d="M4.5 22C6 10 16 4.5 27 4.5C40 4.5 48 12 48 23C48 34 40 42 4.5 73.5H52"/></g>
<g fill="none" stroke="rgba(205,205,205,0.9)" stroke-width="9.75"><path transform="translate(1410.87,629.00) scale(0.1026)" d="M56 21C52 9 42 4.5 30 4.5C15 4.5 5 11 5 21C5 33 17 36 30 40C45 44 55 48 55 58C55 68 44 73.5 30 73.5C16 73.5 6 68 4.5 56"/><path transform="translate(1417.03,629.00) scale(0.1026)" d="M30.5 -4V82M56 21C52 9 42 4.5 30 4.5C15 4.5 5 11 5 21C5 33 17 36 30 40C45 44 55 48 55 58C55 68 44 73.5 30 73.5C16 73.5 6 68 4.5 56"/><path transform="translate(1423.18,629.00) scale(0.1026)" d="M25 0V78M24 5L3 21M0 73.5H49"/></g>
<g fill="none" stroke="rgba(205,205,205,0.9)" stroke-width="9.75"><path transform="translate(1441.87,824.00) scale(0.1026)" d="M56 21C52 9 42 4.5 30 4.5C15 4.5 5 11 5 21C5 33 17 36 30 40C45 44 55 48 55 58C55 68 44 73.5 30 73.5C16 73.5 6 68 4.5 56"/><path transform="translate(1448.03,824.00) scale(0.1026)" d="M30.5 -4V82M56 21C52 9 42 4.5 30 4.5C15 4.5 5 11 5 21C5 33 17 36 30 40C45 44 55 48 55 58C55 68 44 73.5 30 73.5C16 73.5 6 68 4.5 56"/><path transform="translate(1454.18,824.00) scale(0.1026)" d="M6 12C12 6 20 4.5 28 4.5C42 4.5 50 11 50 21C50 32 41 38 27 38C45 38 54 45 54 56C54 67 44 73.5 29 73.5C17 73.5 8 69 4 62"/></g>
<g fill="none" stroke="rgba(205,205,205,0.9)" stroke-width="9.75"><path transform="translate(1252.87,824.00) scale(0.1026)" d="M56 21C52 9 42 4.5 30 4.5C15 4.5 5 11 5 21C5 33 17 36 30 40C45 44 55 48 55 58C55 68 44 73.5 30 73.5C16 73.5 6 68 4.5 56"/><path transform="translate(1259.03,824.00) scale(0.1026)" d="M30.5 -4V82M56 21C52 9 42 4.5 30 4.5C15 4.5 5 11 5 21C5 33 17 36 30 40C45 44 55 48 55 58C55 68 44 73.5 30 73.5C16 73.5 6 68 4.5 56"/><path transform="translate(1265.18,824.00) scale(0.1026)" d="M41 0V78M41 4L4.5 56H57"/></g>
<g transform="rotate(-45 611 458)" fill="none" stroke="rgba(205,205,205,0.9)" stroke-width="9.75"><path transform="translate(601.87,454.00) scale(0.1026)" d="M56 21C52 9 42 4.5 30 4.5C15 4.5 5 11 5 21C5 33 17 36 30 40C45 44 55 48 55 58C55 68 44 73.5 30 73.5C16 73.5 6 68 4.5 56"/><path transform="translate(608.03,454.00) scale(0.1026)" d="M30.5 -4V82M56 21C52 9 42 4.5 30 4.5C15 4.5 5 11 5 21C5 33 17 36 30 40C45 44 55 48 55 58C55 68 44 73.5 30 73.5C16 73.5 6 68 4.5 56"/><path transform="translate(614.18,454.00) scale(0.1026)" d="M4.5 22C6 10 16 4.5 27 4.5C40 4.5 48 12 48 23C48 34 40 42 4.5 73.5H52"/></g>
<g transform="rotate(-45 1107 459)" fill="none" stroke="rgba(205,205,205,0.9)" stroke-width="9.75"><path transform="translate(1097.87,455.00) scale(0.1026)" d="M56 21C52 9 42 4.5 30 4.5C15 4.5 5 11 5 21C5 33 17 36 30 40C45 44 55 48 55 58C55 68 44 73.5 30 73.5C16 73.5 6 68 4.5 56"/><path transform="translate(1104.03,455.00) scale(0.1026)" d="M30.5 -4V82M56 21C52 9 42 4.5 30 4.5C15 4.5 5 11 5 21C5 33 17 36 30 40C45 44 55 48 55 58C55 68 44 73.5 30 73.5C16 73.5 6 68 4.5 56"/><path transform="translate(1110.18,455.00) scale(0.1026)" d="M50 4.5H12L7 36C14 32 21 30 29 30C44 30 53 39 53 51C53 64 43 73.5 29 73.5C17 73.5 8 69 4 62"/></g>
<g transform="rotate(-45 1085 512)" fill="none" stroke="rgba(205,205,205,0.9)" stroke-width="9.75"><path transform="translate(1075.87,508.00) scale(0.1026)" d="M56 21C52 9 42 4.5 30 4.5C15 4.5 5 11 5 21C5 33 17 36 30 40C45 44 55 48 55 58C55 68 44 73.5 30 73.5C16 73.5 6 68 4.5 56"/><path transform="translate(1082.03,508.00) scale(0.1026)" d="M30.5 -4V82M56 21C52 9 42 4.5 30 4.5C15 4.5 5 11 5 21C5 33 17 36 30 40C45 44 55 48 55 58C55 68 44 73.5 30 73.5C16 73.5 6 68 4.5 56"/><path transform="translate(1088.18,508.00) scale(0.1026)" d="M48 10C44 6 36 4.5 28 4.5C12 4.5 5 20 5 40C5 62 14 73.5 29 73.5C44 73.5 53 64 53 51C53 38 44 30 30 30C18 30 8 36 5 46"/></g>
<g transform="rotate(-45 1003 591)" fill="none" stroke="rgba(205,205,205,0.9)" stroke-width="9.75"><path transform="translate(993.87,587.00) scale(0.1026)" d="M56 21C52 9 42 4.5 30 4.5C15 4.5 5 11 5 21C5 33 17 36 30 40C45 44 55 48 55 58C55 68 44 73.5 30 73.5C16 73.5 6 68 4.5 56"/><path transform="translate(1000.03,587.00) scale(0.1026)" d="M30.5 -4V82M56 21C52 9 42 4.5 30 4.5C15 4.5 5 11 5 21C5 33 17 36 30 40C45 44 55 48 55 58C55 68 44 73.5 30 73.5C16 73.5 6 68 4.5 56"/><path transform="translate(1006.18,587.00) scale(0.1026)" d="M48 10C44 6 36 4.5 28 4.5C12 4.5 5 20 5 40C5 62 14 73.5 29 73.5C44 73.5 53 64 53 51C53 38 44 30 30 30C18 30 8 36 5 46"/></g>
<g transform="rotate(-45 1138 367)" fill="none" stroke="rgba(205,205,205,0.9)" stroke-width="9.75"><path transform="translate(1128.87,363.00) scale(0.1026)" d="M56 21C52 9 42 4.5 30 4.5C15 4.5 5 11 5 21C5 33 17 36 30 40C45 44 55 48 55 58C55 68 44 73.5 30 73.5C16 73.5 6 68 4.5 56"/><path transform="translate(1135.03,363.00) scale(0.1026)" d="M30.5 -4V82M56 21C52 9 42 4.5 30 4.5C15 4.5 5 11 5 21C5 33 17 36 30 40C45 44 55 48 55 58C55 68 44 73.5 30 73.5C16 73.5 6 68 4.5 56"/><path transform="translate(1141.18,363.00) scale(0.1026)" d="M4.5 22C6 10 16 4.5 27 4.5C40 4.5 48 12 48 23C48 34 40 42 4.5 73.5H52"/></g>
<g transform="rotate(-45 1293 398)" fill="none" stroke="rgba(205,205,205,0.9)" stroke-width="9.75"><path transform="translate(1283.87,394.00) scale(0.1026)" d="M56 21C52 9 42 4.5 30 4.5C15 4.5 5 11 5 21C5 33 17 36 30 40C45 44 55 48 55 58C55 68 44 73.5 30 73.5C16 73.5 6 68 4.5 56"/><path transform="translate(1290.03,394.00) scale(0.1026)" d="M30.5 -4V82M56 21C52 9 42 4.5 30 4.5C15 4.5 5 11 5 21C5 33 17 36 30 40C45 44 55 48 55 58C55 68 44 73.5 30 73.5C16 73.5 6 68 4.5 56"/><path transform="translate(1296.18,394.00) scale(0.1026)" d="M48 10C44 6 36 4.5 28 4.5C12 4.5 5 20 5 40C5 62 14 73.5 29 73.5C44 73.5 53 64 53 51C53 38 44 30 30 30C18 30 8 36 5 46"/></g>
<g transform="rotate(45 579 737)" fill="none" stroke="rgba(205,205,205,0.9)" stroke-width="9.75"><path transform="translate(569.87,733.00) scale(0.1026)" d="M56 21C52 9 42 4.5 30 4.5C15 4.5 5 11 5 21C5 33 17 36 30 40C45 44 55 48 55 58C55 68 44 73.5 30 73.5C16 73.5 6 68 4.5 56"/><path transform="translate(576.03,733.00) scale(0.1026)" d="M30.5 -4V82M56 21C52 9 42 4.5 30 4.5C15 4.5 5 11 5 21C5 33 17 36 30 40C45 44 55 48 55 58C55 68 44 73.5 30 73.5C16 73.5 6 68 4.5 56"/><path transform="translate(582.18,733.00) scale(0.1026)" d="M25 0V78M24 5L3 21M0 73.5H49"/></g>
<g transform="rotate(45 1264 668)" fill="none" stroke="rgba(205,205,205,0.9)" stroke-width="9.75"><path transform="translate(1254.87,664.00) scale(0.1026)" d="M56 21C52 9 42 4.5 30 4.5C15 4.5 5 11 5 21C5 33 17 36 30 40C45 44 55 48 55 58C55 68 44 73.5 30 73.5C16 73.5 6 68 4.5 56"/><path transform="translate(1261.03,664.00) scale(0.1026)" d="M30.5 -4V82M56 21C52 9 42 4.5 30 4.5C15 4.5 5 11 5 21C5 33 17 36 30 40C45 44 55 48 55 58C55 68 44 73.5 30 73.5C16 73.5 6 68 4.5 56"/><path transform="translate(1267.18,664.00) scale(0.1026)" d="M6 12C12 6 20 4.5 28 4.5C42 4.5 50 11 50 21C50 32 41 38 27 38C45 38 54 45 54 56C54 67 44 73.5 29 73.5C17 73.5 8 69 4 62"/></g>
<g transform="rotate(-90 1186 553)" fill="none" stroke="rgba(205,205,205,0.9)" stroke-width="9.75"><path transform="translate(1176.87,549.00) scale(0.1026)" d="M56 21C52 9 42 4.5 30 4.5C15 4.5 5 11 5 21C5 33 17 36 30 40C45 44 55 48 55 58C55 68 44 73.5 30 73.5C16 73.5 6 68 4.5 56"/><path transform="translate(1183.03,549.00) scale(0.1026)" d="M30.5 -4V82M56 21C52 9 42 4.5 30 4.5C15 4.5 5 11 5 21C5 33 17 36 30 40C45 44 55 48 55 58C55 68 44 73.5 30 73.5C16 73.5 6 68 4.5 56"/><path transform="translate(1189.18,549.00) scale(0.1026)" d="M6 12C12 6 20 4.5 28 4.5C42 4.5 50 11 50 21C50 32 41 38 27 38C45 38 54 45 54 56C54 67 44 73.5 29 73.5C17 73.5 8 69 4 62"/></g>
<g transform="rotate(45 1341 746)" fill="none" stroke="rgba(205,205,205,0.9)" stroke-width="9.75"><path transform="translate(1331.87,742.00) scale(0.1026)" d="M56 21C52 9 42 4.5 30 4.5C15 4.5 5 11 5 21C5 33 17 36 30 40C45 44 55 48 55 58C55 68 44 73.5 30 73.5C16 73.5 6 68 4.5 56"/><path transform="translate(1338.03,742.00) scale(0.1026)" d="M30.5 -4V82M56 21C52 9 42 4.5 30 4.5C15 4.5 5 11 5 21C5 33 17 36 30 40C45 44 55 48 55 58C55 68 44 73.5 30 73.5C16 73.5 6 68 4.5 56"/><path transform="translate(1344.18,742.00) scale(0.1026)" d="M6 12C12 6 20 4.5 28 4.5C42 4.5 50 11 50 21C50 32 41 38 27 38C45 38 54 45 54 56C54 67 44 73.5 29 73.5C17 73.5 8 69 4 62"/></g>
<g transform="rotate(-45 1265 360)" fill="none" stroke="rgba(205,205,205,0.9)" stroke-width="9.75"><path transform="translate(1255.87,356.00) scale(0.1026)" d="M56 21C52 9 42 4.5 30 4.5C15 4.5 5 11 5 21C5 33 17 36 30 40C45 44 55 48 55 58C55 68 44 73.5 30 73.5C16 73.5 6 68 4.5 56"/><path transform="translate(1262.03,356.00) scale(0.1026)" d="M30.5 -4V82M56 21C52 9 42 4.5 30 4.5C15 4.5 5 11 5 21C5 33 17 36 30 40C45 44 55 48 55 58C55 68 44 73.5 30 73.5C16 73.5 6 68 4.5 56"/><path transform="translate(1268.18,356.00) scale(0.1026)" d="M50 4.5H12L7 36C14 32 21 30 29 30C44 30 53 39 53 51C53 64 43 73.5 29 73.5C17 73.5 8 69 4 62"/></g>
<g transform="rotate(-45 1492 337)" fill="none" stroke="rgba(205,205,205,0.9)" stroke-width="9.75"><path transform="translate(1482.87,333.00) scale(0.1026)" d="M56 21C52 9 42 4.5 30 4.5C15 4.5 5 11 5 21C5 33 17 36 30 40C45 44 55 48 55 58C55 68 44 73.5 30 73.5C16 73.5 6 68 4.5 56"/><path transform="translate(1489.03,333.00) scale(0.1026)" d="M30.5 -4V82M56 21C52 9 42 4.5 30 4.5C15 4.5 5 11 5 21C5 33 17 36 30 40C45 44 55 48 55 58C55 68 44 73.5 30 73.5C16 73.5 6 68 4.5 56"/><path transform="translate(1495.18,333.00) scale(0.1026)" d="M48 10C44 6 36 4.5 28 4.5C12 4.5 5 20 5 40C5 62 14 73.5 29 73.5C44 73.5 53 64 53 51C53 38 44 30 30 30C18 30 8 36 5 46"/></g>
<g fill="none" stroke="rgba(200,215,230,0.9)" stroke-width="9.75"><path transform="translate(1332.87,531.00) scale(0.1026)" d="M56 21C52 9 42 4.5 30 4.5C15 4.5 5 11 5 21C5 33 17 36 30 40C45 44 55 48 55 58C55 68 44 73.5 30 73.5C16 73.5 6 68 4.5 56"/><path transform="translate(1339.03,531.00) scale(0.1026)" d="M30.5 -4V82M56 21C52 9 42 4.5 30 4.5C15 4.5 5 11 5 21C5 33 17 36 30 40C45 44 55 48 55 58C55 68 44 73.5 30 73.5C16 73.5 6 68 4.5 56"/><path transform="translate(1345.18,531.00) scale(0.1026)" d="M4.5 4.5H54L22 78"/></g>
<g transform="rotate(-45 1466 428)" fill="none" stroke="rgba(200,215,230,0.9)" stroke-width="9.75"><path transform="translate(1456.87,424.00) scale(0.1026)" d="M56 21C52 9 42 4.5 30 4.5C15 4.5 5 11 5 21C5 33 17 36 30 40C45 44 55 48 55 58C55 68 44 73.5 30 73.5C16 73.5 6 68 4.5 56"/><path transform="translate(1463.03,424.00) scale(0.1026)" d="M30.5 -4V82M56 21C52 9 42 4.5 30 4.5C15 4.5 5 11 5 21C5 33 17 36 30 40C45 44 55 48 55 58C55 68 44 73.5 30 73.5C16 73.5 6 68 4.5 56"/><path transform="translate(1469.18,424.00) scale(0.1026)" d="M4.5 4.5H54L22 78"/></g>
<g transform="rotate(-45 1259 604)" fill="none" stroke="rgba(200,215,230,0.9)" stroke-width="9.75"><path transform="translate(1249.87,600.00) scale(0.1026)" d="M56 21C52 9 42 4.5 30 4.5C15 4.5 5 11 5 21C5 33 17 36 30 40C45 44 55 48 55 58C55 68 44 73.5 30 73.5C16 73.5 6 68 4.5 56"/><path transform="translate(1256.03,600.00) scale(0.1026)" d="M30.5 -4V82M56 21C52 9 42 4.5 30 4.5C15 4.5 5 11 5 21C5 33 17 36 30 40C45 44 55 48 55 58C55 68 44 73.5 30 73.5C16 73.5 6 68 4.5 56"/><path transform="translate(1262.18,600.00) scale(0.1026)" d="M4.5 4.5H54L22 78"/></g>
<g transform="rotate(-45 1142 786)" fill="none" stroke="rgba(200,215,230,0.9)" stroke-width="9.75"><path transform="translate(1132.87,782.00) scale(0.1026)" d="M56 21C52 9 42 4.5 30 4.5C15 4.5 5 11 5 21C5 33 17 36 30 40C45 44 55 48 55 58C55 68 44 73.5 30 73.5C16 73.5 6 68 4.5 56"/><path transform="translate(1139.03,782.00) scale(0.1026)" d="M30.5 -4V82M56 21C52 9 42 4.5 30 4.5C15 4.5 5 11 5 21C5 33 17 36 30 40C45 44 55 48 55 58C55 68 44 73.5 30 73.5C16 73.5 6 68 4.5 56"/><path transform="translate(1145.18,782.00) scale(0.1026)" d="M25 0V78M24 5L3 21M0 73.5H49"/></g>
<g transform="rotate(45 1247 410)" fill="none" stroke="rgba(200,215,230,0.9)" stroke-width="9.75"><path transform="translate(1237.87,406.00) scale(0.1026)" d="M56 21C52 9 42 4.5 30 4.5C15 4.5 5 11 5 21C5 33 17 36 30 40C45 44 55 48 55 58C55 68 44 73.5 30 73.5C16 73.5 6 68 4.5 56"/><path transform="translate(1244.03,406.00) scale(0.1026)" d="M30.5 -4V82M56 21C52 9 42 4.5 30 4.5C15 4.5 5 11 5 21C5 33 17 36 30 40C45 44 55 48 55 58C55 68 44 73.5 30 73.5C16 73.5 6 68 4.5 56"/><path transform="translate(1250.18,406.00) scale(0.1026)" d="M4.5 22C6 10 16 4.5 27 4.5C40 4.5 48 12 48 23C48 34 40 42 4.5 73.5H52"/></g>
<g transform="rotate(-45 1257 690)" fill="none" stroke="rgba(200,215,230,0.9)" stroke-width="9.75"><path transform="translate(1247.87,686.00) scale(0.1026)" d="M56 21C52 9 42 4.5 30 4.5C15 4.5 5 11 5 21C5 33 17 36 30 40C45 44 55 48 55 58C55 68 44 73.5 30 73.5C16 73.5 6 68 4.5 56"/><path transform="translate(1254.03,686.00) scale(0.1026)" d="M30.5 -4V82M56 21C52 9 42 4.5 30 4.5C15 4.5 5 11 5 21C5 33 17 36 30 40C45 44 55 48 55 58C55 68 44 73.5 30 73.5C16 73.5 6 68 4.5 56"/><path transform="translate(1260.18,686.00) scale(0.1026)" d="M25 0V78M24 5L3 21M0 73.5H49"/></g>
<path d="M849 591.5H979M914.5 526V656 M652 828.5H1098 M389 393.5H455 M422.5 360V426 M389 555.5H455 M422.5 522V588 M881 219.5H947 M914.5 186V252 M1201 353.5H1267 M1234.5 320V386 M1201 515.5H1267 M1234.5 482V548 M1201 718.5H1267 M1234.5 685V751 M1404 353.5H1470 M1437.5 320V386 M1404 515.5H1470 M1437.5 482V548 M477 510.5H539 M508.5 479V541 M477 672.5H539 M508.5 641V703 M1289 308.5H1351 M1320.5 277V339 M1289 470.5H1351 M1320.5 439V501 M1289 632.5H1351 M1320.5 601V663 M1491 308.5H1553 M1522.5 277V339 M1491 470.5H1553 M1522.5 439V501 M1491 632.5H1553 M1522.5 601V663 M1289 834.5H1351 M1320.5 803V865 M1451 834.5H1513 M1482.5 803V865" stroke="rgba(230,230,230,0.75)" stroke-width="1"/>
<path d="M387.5 203V1034M427.5 203V1034M468.5 203V1034M508.5 203V1034M549.5 203V1034M590.5 203V1034M630.5 203V1034M671.5 203V1034M711.5 203V1034M752.5 203V1034M792.5 203V1034M833.5 203V1034M873.5 203V1034M914.5 203V1034M954.5 203V1034M995.5 203V1034M1035.5 203V1034M1076.5 203V1034M1117.5 203V1034M1157.5 203V1034M1198.5 203V1034M1238.5 203V1034M1279.5 203V1034M1319.5 203V1034M1360.5 203V1034M1400.5 203V1034M1441.5 203V1034M1481.5 203V1034M1522.5 203V1034M1562.5 203V1034M1603.5 203V1034M400 186.5H1504M400 226.5H1504M400 267.5H1504M400 307.5H1504M400 348.5H1504M400 389.5H1504M400 429.5H1504M400 470.5H1504M400 510.5H1504M400 551.5H1504M400 591.5H1504M400 632.5H1504M400 672.5H1504M400 713.5H1504M400 753.5H1504M400 794.5H1504M400 834.5H1504M400 875.5H1504M400 916.5H1504M400 956.5H1504M400 997.5H1504M400 1037.5H1504M400 1078.5H1504" stroke="rgba(150,150,150,0.21)" stroke-width="1" fill="none" clip-path="url(#bd)"/>
</g>
<rect x="408.5" y="173.5" width="193" height="25" fill="#fff" stroke="#a0a0a0"/>
<rect x="413" y="176" width="20" height="20" fill="#5aad71"/>
<text x="439" y="191" font-family="Liberation Sans" font-size="13" fill="#111" textLength="73" lengthAdjust="spacingAndGlyphs">20 Dimension</text>
<path d="M589 183h7l-3.5 5z" fill="#555"/>
<text x="621" y="191" font-family="Liberation Sans" font-size="13" fill="#222" textLength="92" lengthAdjust="spacingAndGlyphs">25 mil (975 975)</text>
<rect x="755.5" y="173.5" width="461" height="25" fill="#f3f3f3" stroke="#a0a0a0"/>
<text x="762" y="191" font-family="Liberation Sans" font-size="13" fill="#808080" textLength="272" lengthAdjust="spacingAndGlyphs">Click or press Slash to activate command line mode</text>
<defs><pattern id="chk" width="2" height="2" patternUnits="userSpaceOnUse"><rect width="2" height="2" fill="#f2f2f2"/><rect width="1" height="1" fill="#d6d6d6"/><rect x="1" y="1" width="1" height="1" fill="#d6d6d6"/></pattern></defs>
<rect x="1504" y="169" width="12" height="34" fill="#f1f1f1"/><rect x="1504" y="203" width="12" height="831" fill="url(#chk)"/><rect x="1504" y="1034" width="16" height="16" fill="#cfcfcf"/>
<rect x="1505" y="718" width="13" height="90" fill="#d0d0d0"/><rect x="1509" y="719" width="5" height="88" rx="2" fill="#9c9c9c"/>
<rect x="400" y="1034" width="1104" height="16" fill="url(#chk)"/>
<rect x="587" y="1035" width="102" height="13" fill="#d0d0d0"/><rect x="587" y="1039" width="102" height="5" rx="2" fill="#9c9c9c"/>
<rect x="801" y="1006" width="317" height="24" fill="#f1f1f1"/>
<g>
<circle cx="812" cy="1018" r="6.5" fill="#6fa8e0" stroke="#3a78b8" stroke-width="1"/><rect x="811" y="1016" width="2" height="6" fill="#fff"/><circle cx="812" cy="1013.5" r="1.1" fill="#fff"/>
<ellipse cx="838" cy="1018" rx="8" ry="5" fill="#333"/><ellipse cx="838" cy="1018" rx="2.8" ry="3" fill="none" stroke="#fff" stroke-width="1.4"/>
<path d="M858 1015l4-4v2.5c5 0 8 3 8 8c-2-3-4-4-8-4v2.5z" fill="#444"/>
<path d="M896 1015l-4-4v2.5c-5 0-8 3-8 8c2-3 4-4 8-4v2.5z" fill="#999"/>
<circle cx="914" cy="1016" r="5.5" fill="none" stroke="#888" stroke-width="1.2"/><path d="M918 1020l4 4" stroke="#333" stroke-width="2"/><path d="M914 1013v6M911 1016h6" stroke="#6fa8e0" stroke-width="1"/>
<circle cx="940" cy="1016" r="5.5" fill="none" stroke="#888" stroke-width="1.2"/><path d="M944 1020l4 4" stroke="#333" stroke-width="2"/><path d="M937 1016h6" stroke="#6fa8e0" stroke-width="1"/>
<circle cx="966" cy="1016" r="5.5" fill="none" stroke="#888" stroke-width="1.2"/><path d="M970 1020l4 4" stroke="#333" stroke-width="2"/><rect x="962" y="1013" width="8" height="5" fill="#6fa8e0"/>
<path d="M987 1012h15M987 1017h15M987 1022h15M990 1010v15M995 1010v15M1000 1010v15" stroke="#555" stroke-width="1.2"/>
<path d="M1012 1018h16M1020 1010v15" stroke="#555" stroke-width="1.2"/>
<circle cx="1046" cy="1018" r="8" fill="#e8334f"/><rect x="1041" y="1016.5" width="10" height="3" fill="#fff"/>
<rect x="1064.5" y="1010.5" width="13" height="10" fill="none" stroke="#26a844" stroke-width="1" stroke-dasharray="2 1.5"/><path d="M1074 1016v10l2-2l1.5 3l1.2-.6l-1.5-3h3z" fill="#fff" stroke="#333" stroke-width=".8"/>
<path d="M1093 1010v15M1090 1018h13a4 4 0 0 0 0-8h-10" fill="none" stroke="#333" stroke-width="1.1"/><path d="M1090 1018h11" stroke="#6fc0f0" stroke-width="2"/><path d="M1108 1016h7l-3.5 4z" fill="#333"/>
</g>
</svg><!--CANVAS_END-->
<!--RIGHT_START--><!-- RIGHT PANEL -->
<div class="a" style="left:1520px;top:169px;width:400px;height:881px;background:#f1f1f1"></div>
<svg style="left:0;top:0" width="1920" height="1080" viewBox="0 0 1920 1080">
<defs><pattern id="dots" width="2" height="2" patternUnits="userSpaceOnUse"><rect width="2" height="2" fill="#f4f4f4"/><rect width="1" height="1" fill="#cfcfcf"/><rect x="1" y="1" width="1" height="1" fill="#cfcfcf"/></pattern></defs>
<rect x="1516" y="203" width="4" height="847" fill="url(#dots)"/>
<g font-family="Liberation Sans">
 <rect x="1521" y="176" width="1" height="10" fill="#777"/><rect x="1523.5" y="176" width="1" height="10" fill="#777"/>
 <circle cx="1536.5" cy="181" r="4.5" fill="#333"/><rect x="1533.5" y="180.3" width="6" height="1.5" fill="#fff"/>
 <text x="1545" y="186" font-size="12" fill="#666" textLength="55" lengthAdjust="spacingAndGlyphs">INSPECTOR</text>
 <path d="M1905 177.5l5 4l-5 4z M1910 177.5l5 4l-5 4z" fill="#333"/>
 <text x="1668" y="212" font-size="13.5" font-weight="bold" fill="#111" textLength="104" lengthAdjust="spacingAndGlyphs">Nothing Selected</text>
 <rect x="1546" y="223" width="374" height="24" fill="#f6f6f6"/>
 <rect x="1522" y="223" width="24" height="24" rx="2" fill="#0696d7"/><path d="M1529.5 232.5h9l-4.5 5z" fill="#111"/>
 <text x="1548" y="241" font-size="13.5" font-weight="bold" fill="#111" textLength="117" lengthAdjust="spacingAndGlyphs">Board Information</text>
 <g font-size="13" font-weight="bold" fill="#333">
  <text x="1524" y="266" textLength="76" lengthAdjust="spacingAndGlyphs">Dimensions</text>
  <text x="1524" y="332" textLength="61" lengthAdjust="spacingAndGlyphs">Elements</text>
  <text x="1524" y="420" textLength="52" lengthAdjust="spacingAndGlyphs">Signals</text>
  <text x="1524" y="486" textLength="68" lengthAdjust="spacingAndGlyphs">Primitives</text>
 </g>
 <g font-size="12" fill="#222">
  <text x="1640" y="265" textLength="34" lengthAdjust="spacingAndGlyphs">Width:</text><text x="1720" y="265" textLength="87" lengthAdjust="spacingAndGlyphs">25.00598125 mm</text>
  <text x="1640" y="287" textLength="38" lengthAdjust="spacingAndGlyphs">Height:</text><text x="1720" y="287" textLength="89" lengthAdjust="spacingAndGlyphs">13.916659375 mm</text>
  <text x="1640" y="331" textLength="27" lengthAdjust="spacingAndGlyphs">Total:</text><text x="1720" y="331">16</text>
  <text x="1640" y="353" textLength="22" lengthAdjust="spacingAndGlyphs">Top:</text><text x="1720" y="353">16</text>
  <text x="1640" y="375" textLength="41" lengthAdjust="spacingAndGlyphs">Bottom:</text><text x="1720" y="375">0</text>
  <text x="1640" y="419" textLength="27" lengthAdjust="spacingAndGlyphs">Total:</text><text x="1720" y="419">7</text>
  <text x="1640" y="441" textLength="44" lengthAdjust="spacingAndGlyphs">Airwires:</text><text x="1720" y="441">1</text>
  <text x="1640" y="485" textLength="28" lengthAdjust="spacingAndGlyphs">Pads:</text><text x="1720" y="485">23</text>
  <text x="1640" y="507" textLength="24" lengthAdjust="spacingAndGlyphs">Vias:</text><text x="1720" y="507">0</text>
  <text x="1640" y="529" textLength="32" lengthAdjust="spacingAndGlyphs">Holes:</text><text x="1720" y="529">0</text>
  <text x="1640" y="551" textLength="73" lengthAdjust="spacingAndGlyphs">Copper Pours:</text><text x="1720" y="551">0</text>
 </g>
 <!-- selection filter -->
 <rect x="1521" y="611" width="1" height="21" fill="#999"/>
 <rect x="1522" y="617" width="1" height="10" fill="#777"/><rect x="1524.5" y="617" width="1" height="10" fill="#777"/>
 <circle cx="1536.5" cy="622" r="4.5" fill="#333"/><rect x="1533.5" y="621.3" width="6" height="1.5" fill="#fff"/>
 <text x="1545" y="627" font-size="12" fill="#666" textLength="90" lengthAdjust="spacingAndGlyphs">SELECTION FILTER</text>
 <rect x="1521.5" y="632.5" width="397" height="417" fill="none" stroke="#a8a8a8"/>
 <text x="1523" y="646" font-size="13" fill="#111" textLength="31" lengthAdjust="spacingAndGlyphs">Types</text>
 <rect x="1522" y="653" width="396" height="149" fill="#f4f4f4" stroke="#a8a8a8" stroke-width="1"/>
 <rect x="1522" y="653" width="380" height="149" fill="#0696d7"/>
 <rect x="1907" y="655" width="6" height="67" rx="3" fill="#9c9c9c"/>
 <g font-size="13" fill="#fff">
  <text x="1547" y="669" textLength="37" lengthAdjust="spacingAndGlyphs">Airwire</text>
  <text x="1547" y="689" textLength="50" lengthAdjust="spacingAndGlyphs">Attribute</text>
  <text x="1547" y="709" textLength="29" lengthAdjust="spacingAndGlyphs">Circle</text>
  <text x="1547" y="729" textLength="35" lengthAdjust="spacingAndGlyphs">Device</text>
  <text x="1547" y="749" textLength="55" lengthAdjust="spacingAndGlyphs">Dimension</text>
  <text x="1547" y="769" textLength="33" lengthAdjust="spacingAndGlyphs">Frame</text>
  <text x="1547" y="789" textLength="33" lengthAdjust="spacingAndGlyphs">Group</text>
 </g>
 <path d="M1527 659l2 2M1537 659l2 2M1531 666l2 2" stroke="#4fb0e8" stroke-width="1.2"/>
 <path d="M1527 680l6-5h6v6l-6 6z" fill="none" stroke="#3aa5e0" stroke-width="1.2"/>
 <circle cx="1533" cy="704" r="7" fill="#a8d6f5" stroke="#2c78b8" stroke-width="1"/>
 <path d="M1526 727h15v-4c-2-3-4-4-7.5-4s-5.5 1-7.5 4z" fill="#8fb6d8"/>
 <path d="M1526 737v14M1540 737v14M1527 744h12" stroke="#1d4f8a" stroke-width="1.2"/>
 <rect x="1526" y="757" width="14" height="14" fill="#8aaccc" stroke="#2c4f8a" stroke-width="1"/><rect x="1529" y="760" width="8" height="8" fill="#0696d7"/>
 <rect x="1526" y="777" width="14" height="14" fill="#a8d0f0"/><circle cx="1533" cy="784" r="3" fill="#5a9ad8"/>
 <rect x="1526" y="797" width="14" height="5" fill="#8aaccc"/>
 <rect x="1522" y="802" width="396" height="25" fill="#f1f1f1"/>
 <text x="1521" y="820" font-size="13" fill="#111" textLength="32" lengthAdjust="spacingAndGlyphs">Layers</text>
 <rect x="1522.5" y="828.5" width="395" height="80" fill="#fff" stroke="#a8a8a8"/>
 <rect x="1523" y="845" width="394" height="16" fill="#f3f3f3"/><rect x="1523" y="877" width="394" height="16" fill="#f3f3f3"/>
 <g font-size="12.5" fill="#222">
  <text x="1526" y="841" textLength="28" lengthAdjust="spacingAndGlyphs">&lt;All&gt;</text>
  <text x="1526" y="857" textLength="99" lengthAdjust="spacingAndGlyphs">&lt;Preset_Bottom&gt;</text>
  <text x="1526" y="873" textLength="107" lengthAdjust="spacingAndGlyphs">&lt;Preset_Standard&gt;</text>
  <text x="1526" y="889" textLength="80" lengthAdjust="spacingAndGlyphs">&lt;Preset_Top&gt;</text>
 </g>
 <rect x="1522" y="909" width="396" height="4" fill="#f1f1f1"/>
 <rect x="1522" y="913" width="396" height="108" fill="#f4f4f4"/>
 <rect x="1522" y="913" width="380" height="108" fill="#0696d7"/>
 <rect x="1905" y="915" width="6" height="30" rx="3" fill="#9c9c9c"/>
 <rect x="1525" y="916" width="16" height="16" fill="#b05a80"/>
 <rect x="1525" y="936" width="16" height="16" fill="#1f80c8"/>
 <rect x="1525" y="956" width="16" height="16" fill="#3a9f80"/>
 <rect x="1525" y="976" width="16" height="16" fill="#3a9f80"/>
 <rect x="1525" y="996" width="16" height="16" fill="#8ab4dc"/>
 <rect x="1525" y="1016" width="16" height="5" fill="#3a9f80"/>
 <g font-size="13" fill="#fff">
  <text x="1547" y="929" textLength="33" lengthAdjust="spacingAndGlyphs">1 Top</text>
  <text x="1547" y="949" textLength="60" lengthAdjust="spacingAndGlyphs">16 Bottom</text>
  <text x="1547" y="969" textLength="44" lengthAdjust="spacingAndGlyphs">17 Pads</text>
  <text x="1547" y="989" textLength="40" lengthAdjust="spacingAndGlyphs">18 Vias</text>
  <text x="1547" y="1009" textLength="70" lengthAdjust="spacingAndGlyphs">19 Unrouted</text>
 </g>
 <rect x="1522" y="1021" width="396" height="28" fill="#f1f1f1"/>
 <rect x="1870.5" y="1022.5" width="47" height="26" rx="3" fill="#fff" stroke="#9a9a9a"/>
 <text x="1879" y="1041" font-size="13" fill="#111" textLength="30" lengthAdjust="spacingAndGlyphs">Reset</text>
</g>
<!-- RIPUP panel -->
<g font-family="Liberation Sans">
 <rect x="1217.5" y="173.5" width="298" height="147" fill="#f1f1f1" stroke="#c4c4c4"/>
 <rect x="1218" y="197" width="297" height="1" fill="#c4c4c4"/>
 <rect x="1218" y="284" width="297" height="1" fill="#c4c4c4"/>
 <rect x="1218" y="180" width="1" height="10" fill="#777"/><rect x="1220.5" y="180" width="1" height="10" fill="#777"/>
 <circle cx="1232" cy="185" r="4.5" fill="#333"/><rect x="1229" y="184.3" width="6" height="1.5" fill="#fff"/>
 <text x="1241" y="190" font-size="12" fill="#555" textLength="29" lengthAdjust="spacingAndGlyphs">RIPUP</text>
 <path d="M1501 181l5 4l-5 4z M1506 181l5 4l-5 4z" fill="#333"/>
 <text x="1233" y="250" font-size="13" fill="#111" textLength="29" lengthAdjust="spacingAndGlyphs">Ripup</text>
 <rect x="1317" y="211" width="28.5" height="28.5" rx="2" fill="#0696d7" stroke="#0a6aa8" stroke-width="1"/>
 <path d="M1323 218h7l8 8v8" fill="none" stroke="#4fc0f8" stroke-width="1.2"/><path d="M1323 227l5 5M1328 227l-5 5" stroke="#e8334f" stroke-width="1.6"/>
 <rect x="1356.5" y="211.5" width="28" height="28" rx="2" fill="#f7f7f7" stroke="#707070"/>
 <path d="M1362 218h9" stroke="#2a8fd8" stroke-width="1.3"/><circle cx="1373" cy="224" r="3.5" fill="none" stroke="#555" stroke-width="1"/><path d="M1376 227l4 4" stroke="#e8334f" stroke-width="1.4"/><path d="M1362 228l4 4M1366 228l-4 4" stroke="#e8334f" stroke-width="1.5"/>
 <rect x="1395.5" y="211.5" width="28" height="28" rx="2" fill="#f7f7f7" stroke="#707070"/>
 <path d="M1401 218h9" stroke="#e8334f" stroke-width="1.3"/><circle cx="1412" cy="224" r="3.5" fill="none" stroke="#555" stroke-width="1"/><path d="M1415 227l4 4" stroke="#e8334f" stroke-width="1.4"/><path d="M1401 228l4 4M1405 228l-4 4" stroke="#e8334f" stroke-width="1.5"/>
 <rect x="1434.5" y="211.5" width="28" height="28" rx="2" fill="#f7f7f7" stroke="#707070"/>
 <circle cx="1443" cy="220" r="2.5" fill="none" stroke="#777" stroke-width="1"/><path d="M1446 220h9M1442 223c0 5 3 8 6 8h7" fill="none" stroke="#2a8fd8" stroke-width="1.2"/><path d="M1449 218l3 3M1452 218l-3 3M1449 229l3 3M1452 229l-3 3" stroke="#e8334f" stroke-width="1.2"/>
 <rect x="1317.5" y="250.5" width="28" height="28" rx="2" fill="#f7f7f7" stroke="#707070"/>
 <path d="M1325 258h6c4 0 6 2 6 6v5" fill="none" stroke="#2a8fd8" stroke-width="1.2"/><path d="M1321 258h4M1323 256v4M1335 269h4M1337 267v4" stroke="#555" stroke-width="1.2"/><path d="M1321 266l4 4M1325 266l-4 4" stroke="#e8334f" stroke-width="1.5"/>
 <circle cx="1231" cy="303" r="6" fill="#111"/><rect x="1230" y="301" width="2" height="6" fill="#fff"/><circle cx="1231" cy="298.8" r="1.1" fill="#fff"/>
 <rect x="1374.5" y="293.5" width="58.5" height="18" fill="#e8e8e8" stroke="#a8a8a8"/>
 <text x="1403.5" y="307" font-size="13" fill="#555" text-anchor="middle">OK</text>
 <rect x="1444.5" y="293.5" width="59" height="18" fill="#e8e8e8" stroke="#a8a8a8"/>
 <text x="1474" y="307" font-size="13" fill="#555" text-anchor="middle">Cancel</text>
</g>
</svg>
<!--RIGHT_END-->
</body></html>
